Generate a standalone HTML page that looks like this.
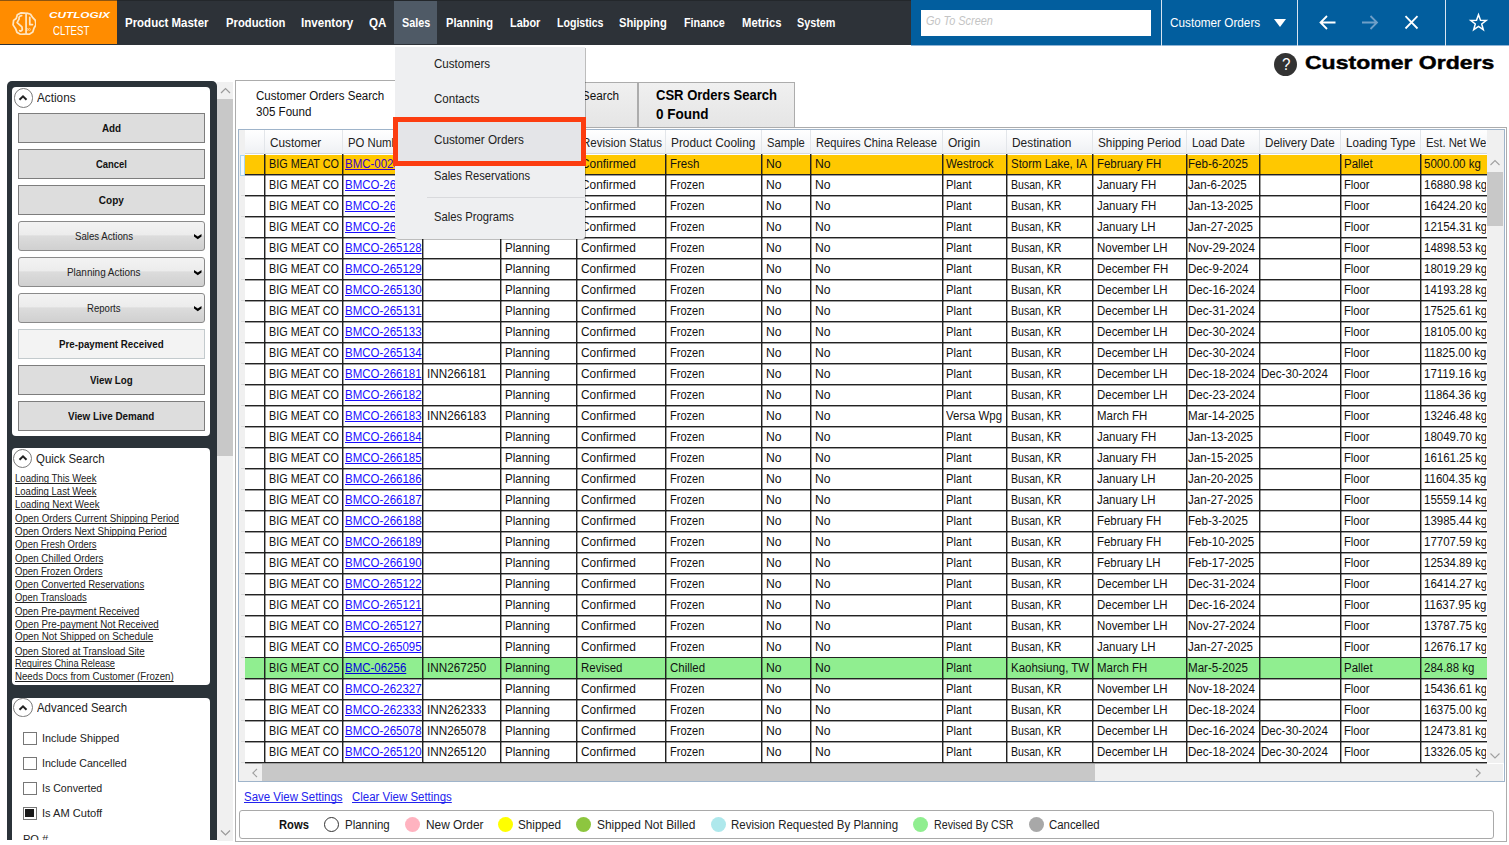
<!DOCTYPE html><html><head><meta charset="utf-8"><style>
html,body{margin:0;padding:0;background:#fff;width:1509px;height:845px;overflow:hidden;position:relative;font-family:"Liberation Sans",sans-serif;}
div{position:absolute;}
.t{position:absolute;white-space:nowrap;transform-origin:0 0;text-decoration-skip-ink:none;}
</style></head><body>
<div style="left:0.00px;top:0.00px;width:911.00px;height:45.00px;background:#2d3238;"></div>
<div style="left:0.00px;top:1.00px;width:117.00px;height:43.00px;background:#ff8c00;"></div>
<div style="left:0.00px;top:0.00px;width:911.00px;height:1.00px;background:#23272b;"></div>
<div style="left:0.00px;top:0.00px;width:117.00px;height:1.00px;background:#8c5410;"></div>
<div style="left:394.00px;top:1.00px;width:43.00px;height:43.00px;background:#4f5a66;"></div>
<svg style="position:absolute;left:11.8px;top:11.7px" width="24.6" height="23.5" viewBox="100 150 650 620">
<g fill="none" stroke="#ffe6c2" stroke-width="46" stroke-linejoin="round" stroke-linecap="round">
<path d="M450 178 L340 172 L240 222 L212 320 L142 372 L128 490 L196 590 L232 688 L330 742 L448 734"/>
<path d="M492 178 L590 208 L650 300 L718 372 L732 490 L680 580 L650 680 L550 742 L492 734"/>
<path d="M355 245 C300 250 272 290 290 330 L235 430 L362 545 L372 612 C362 652 322 662 302 640"/>
<path d="M570 290 L570 482 L640 482"/>
<path d="M472 192 L472 722"/>
<circle cx="500" cy="610" r="8"/><circle cx="560" cy="610" r="8"/>
</g></svg>
<span class="t" style="left:49.30px;top:11.17px;font-size:8.3px;line-height:8.3px;color:#fff;font-weight:700;font-style:italic;transform:scaleX(1.4181);">CUTLOGIX</span>
<span class="t" style="left:52.50px;top:25.09px;font-size:12.3px;line-height:12.3px;color:#fff;transform:scaleX(0.7871);">CLTEST</span>
<span class="t" style="left:125.40px;top:17.42px;font-size:12.5px;line-height:12.5px;color:#fff;font-weight:700;transform:scaleX(0.9176);">Product Master</span>
<span class="t" style="left:225.50px;top:17.42px;font-size:12.5px;line-height:12.5px;color:#fff;font-weight:700;transform:scaleX(0.9015);">Production</span>
<span class="t" style="left:301.00px;top:17.42px;font-size:12.5px;line-height:12.5px;color:#fff;font-weight:700;transform:scaleX(0.9298);">Inventory</span>
<span class="t" style="left:369.00px;top:17.42px;font-size:12.5px;line-height:12.5px;color:#fff;font-weight:700;transform:scaleX(0.9280);">QA</span>
<span class="t" style="left:402.20px;top:17.42px;font-size:12.5px;line-height:12.5px;color:#fff;font-weight:700;transform:scaleX(0.8644);">Sales</span>
<span class="t" style="left:446.10px;top:17.42px;font-size:12.5px;line-height:12.5px;color:#fff;font-weight:700;transform:scaleX(0.8891);">Planning</span>
<span class="t" style="left:509.60px;top:17.42px;font-size:12.5px;line-height:12.5px;color:#fff;font-weight:700;transform:scaleX(0.8748);">Labor</span>
<span class="t" style="left:556.70px;top:17.42px;font-size:12.5px;line-height:12.5px;color:#fff;font-weight:700;transform:scaleX(0.8474);">Logistics</span>
<span class="t" style="left:619.30px;top:17.42px;font-size:12.5px;line-height:12.5px;color:#fff;font-weight:700;transform:scaleX(0.8935);">Shipping</span>
<span class="t" style="left:684.10px;top:17.42px;font-size:12.5px;line-height:12.5px;color:#fff;font-weight:700;transform:scaleX(0.8656);">Finance</span>
<span class="t" style="left:741.60px;top:17.42px;font-size:12.5px;line-height:12.5px;color:#fff;font-weight:700;transform:scaleX(0.9006);">Metrics</span>
<span class="t" style="left:797.20px;top:17.42px;font-size:12.5px;line-height:12.5px;color:#fff;font-weight:700;transform:scaleX(0.8652);">System</span>
<div style="left:911.00px;top:0.00px;width:598.00px;height:45.00px;background:#025e9e;"></div>
<div style="left:911.00px;top:45.00px;width:598.00px;height:1.00px;background:#8fb4d6;"></div>
<div style="left:921.00px;top:9.50px;width:229.50px;height:26.00px;background:#fff;"></div>
<span class="t" style="left:926.00px;top:15.04px;font-size:12px;line-height:12px;color:#c4c4c4;font-style:italic;transform:scaleX(0.9081);">Go To Screen</span>
<div style="left:1161.00px;top:0.00px;width:1.20px;height:46.00px;background:#d7e4f0;"></div>
<div style="left:1297.00px;top:0.00px;width:1.20px;height:46.00px;background:#d7e4f0;"></div>
<div style="left:1445.00px;top:0.00px;width:1.20px;height:46.00px;background:#d7e4f0;"></div>
<span class="t" style="left:1170.40px;top:16.72px;font-size:12.5px;line-height:12.5px;color:#fff;transform:scaleX(0.9408);">Customer Orders</span>
<svg style="position:absolute;left:1273px;top:18px" width="14" height="10"><path d="M1 1 L13 1 L7 9 Z" fill="#fff"/></svg>
<svg style="position:absolute;left:1318px;top:13px" width="20" height="20" fill="none" stroke="#fff" stroke-width="1.8">
<path d="M2.5 9.5 L17.5 9.5 M9 3 L2.5 9.5 L9 16"/></svg>
<svg style="position:absolute;left:1360px;top:13px" width="20" height="20" fill="none" stroke="#6f9fc8" stroke-width="1.8">
<path d="M2 9.5 L17 9.5 M10.5 3 L17 9.5 L10.5 16"/></svg>
<svg style="position:absolute;left:1401px;top:12px" width="20" height="20" fill="none" stroke="#fff" stroke-width="1.8">
<path d="M4.5 4.2 L16.5 16.5 M16.5 4.2 L4.5 16.5"/></svg>
<svg style="position:absolute;left:1468px;top:12px" width="22" height="22" fill="none" stroke="#fff" stroke-width="1.5" stroke-linejoin="miter">
<path d="M10.5 2.8 L12.5 8.3 L18.2 8.5 L13.7 12 L15.3 17.6 L10.5 14.3 L5.7 17.6 L7.3 12 L2.8 8.5 L8.5 8.3 Z"/></svg>
<div style="left:1274.4px;top:53px;width:23px;height:23px;border-radius:50%;background:#333;"></div>
<span class="t" style="left:1281.65px;top:56.41px;font-size:17px;line-height:17px;color:#fff;transform:scaleX(0.8929);">?</span>
<span class="t" style="left:1305.40px;top:52.82px;font-size:19px;line-height:19px;color:#000;font-weight:700;transform:scaleX(1.2114);-webkit-text-stroke:0.45px #000;">Customer Orders</span>
<div style="left:6.50px;top:81.00px;width:210.00px;height:759.50px;background:#2b3339;border-radius:5px 5px 0 0;"></div>
<div style="left:12.40px;top:87.00px;width:198.00px;height:348.60px;background:#fff;border-radius:4px;"></div>
<div style="left:12.40px;top:448.00px;width:198.00px;height:237.40px;background:#fff;border-radius:4px;"></div>
<div style="left:12.40px;top:698.00px;width:198.00px;height:142.50px;background:#fff;border-radius:4px 4px 0 0;"></div>
<div style="left:13.60px;top:88.40px;width:19.2px;height:19.2px;border:1.5px solid #7a7a7a;border-radius:50%;box-sizing:border-box;"></div>
<svg style="position:absolute;left:17.20px;top:92.00px" width="12" height="12" fill="none" stroke="#222" stroke-width="2"><path d="M2.5 7.8 L6 4.3 L9.5 7.8"/></svg>
<span class="t" style="left:36.60px;top:91.72px;font-size:12.5px;line-height:12.5px;color:#222;transform:scaleX(0.9415);">Actions</span>
<div style="left:13.10px;top:448.70px;width:19.2px;height:19.2px;border:1.5px solid #7a7a7a;border-radius:50%;box-sizing:border-box;"></div>
<svg style="position:absolute;left:16.70px;top:452.30px" width="12" height="12" fill="none" stroke="#222" stroke-width="2"><path d="M2.5 7.8 L6 4.3 L9.5 7.8"/></svg>
<span class="t" style="left:36.40px;top:452.92px;font-size:12.5px;line-height:12.5px;color:#222;transform:scaleX(0.9147);">Quick Search</span>
<div style="left:13.40px;top:698.30px;width:19.2px;height:19.2px;border:1.5px solid #7a7a7a;border-radius:50%;box-sizing:border-box;"></div>
<svg style="position:absolute;left:17.00px;top:701.90px" width="12" height="12" fill="none" stroke="#222" stroke-width="2"><path d="M2.5 7.8 L6 4.3 L9.5 7.8"/></svg>
<span class="t" style="left:36.70px;top:702.42px;font-size:12.5px;line-height:12.5px;color:#222;transform:scaleX(0.9125);">Advanced Search</span>
<div style="left:17.50px;top:113.30px;width:187.60px;height:29.50px;background:#dddddd;border:1.3px solid #7d7d7d;box-sizing:border-box;"></div>
<span class="t" style="left:102.00px;top:123.84px;font-size:10px;line-height:10px;color:#111;font-weight:700;transform:scaleX(0.9845);">Add</span>
<div style="left:17.50px;top:149.30px;width:187.60px;height:29.50px;background:#dddddd;border:1.3px solid #7d7d7d;box-sizing:border-box;"></div>
<span class="t" style="left:96.00px;top:159.84px;font-size:10px;line-height:10px;color:#111;font-weight:700;transform:scaleX(0.9451);">Cancel</span>
<div style="left:17.50px;top:185.30px;width:187.60px;height:29.50px;background:#dddddd;border:1.3px solid #7d7d7d;box-sizing:border-box;"></div>
<span class="t" style="left:98.80px;top:195.84px;font-size:10px;line-height:10px;color:#111;font-weight:700;">Copy</span>
<div style="left:17.80px;top:221.30px;width:187.40px;height:29.50px;background:linear-gradient(#f3f3f3 0%,#ececec 45%,#dcdcdc 50%,#d0d0d0 100%);border:1.2px solid #8a8a8a;border-radius:3px;box-sizing:border-box;"></div>
<svg style="position:absolute;left:194px;top:234.10px" width="8" height="6"><path d="M0 0 L3.75 2.5 L7.5 0 L7.5 2.6 L3.75 5.2 L0 2.6 Z" fill="#000"/></svg>
<span class="t" style="left:75.00px;top:231.49px;font-size:11px;line-height:11px;color:#222;transform:scaleX(0.8788);">Sales Actions</span>
<div style="left:17.80px;top:257.30px;width:187.40px;height:29.50px;background:linear-gradient(#f3f3f3 0%,#ececec 45%,#dcdcdc 50%,#d0d0d0 100%);border:1.2px solid #8a8a8a;border-radius:3px;box-sizing:border-box;"></div>
<svg style="position:absolute;left:194px;top:270.10px" width="8" height="6"><path d="M0 0 L3.75 2.5 L7.5 0 L7.5 2.6 L3.75 5.2 L0 2.6 Z" fill="#000"/></svg>
<span class="t" style="left:67.00px;top:267.49px;font-size:11px;line-height:11px;color:#222;transform:scaleX(0.9029);">Planning Actions</span>
<div style="left:17.80px;top:293.30px;width:187.40px;height:29.50px;background:linear-gradient(#f3f3f3 0%,#ececec 45%,#dcdcdc 50%,#d0d0d0 100%);border:1.2px solid #8a8a8a;border-radius:3px;box-sizing:border-box;"></div>
<svg style="position:absolute;left:194px;top:306.10px" width="8" height="6"><path d="M0 0 L3.75 2.5 L7.5 0 L7.5 2.6 L3.75 5.2 L0 2.6 Z" fill="#000"/></svg>
<span class="t" style="left:87.10px;top:303.49px;font-size:11px;line-height:11px;color:#222;transform:scaleX(0.8701);">Reports</span>
<div style="left:17.50px;top:329.30px;width:187.60px;height:29.50px;background:#f3f3f3;border:1.2px solid #c3cacd;box-sizing:border-box;"></div>
<span class="t" style="left:58.80px;top:339.84px;font-size:10px;line-height:10px;color:#111;font-weight:700;transform:scaleX(0.9758);">Pre-payment Received</span>
<div style="left:17.50px;top:365.30px;width:187.60px;height:29.50px;background:#dddddd;border:1.3px solid #7d7d7d;box-sizing:border-box;"></div>
<span class="t" style="left:90.00px;top:375.84px;font-size:10px;line-height:10px;color:#111;font-weight:700;transform:scaleX(0.9748);">View Log</span>
<div style="left:17.50px;top:401.30px;width:187.60px;height:29.50px;background:#dddddd;border:1.3px solid #7d7d7d;box-sizing:border-box;"></div>
<span class="t" style="left:68.20px;top:411.84px;font-size:10px;line-height:10px;color:#111;font-weight:700;transform:scaleX(0.9840);">View Live Demand</span>
<span class="t" style="left:15.20px;top:473.54px;font-size:10px;line-height:10px;color:#222;text-decoration:underline;transform:scaleX(0.9555);">Loading This Week</span>
<span class="t" style="left:15.20px;top:486.64px;font-size:10px;line-height:10px;color:#222;text-decoration:underline;transform:scaleX(0.9532);">Loading Last Week</span>
<span class="t" style="left:15.20px;top:499.74px;font-size:10px;line-height:10px;color:#222;text-decoration:underline;transform:scaleX(0.9702);">Loading Next Week</span>
<span class="t" style="left:15.20px;top:513.63px;font-size:10px;line-height:10px;color:#222;text-decoration:underline;transform:scaleX(0.9803);">Open Orders Current Shipping Period</span>
<span class="t" style="left:15.20px;top:526.73px;font-size:10px;line-height:10px;color:#222;text-decoration:underline;transform:scaleX(0.9819);">Open Orders Next Shipping Period</span>
<span class="t" style="left:15.20px;top:539.73px;font-size:10px;line-height:10px;color:#222;text-decoration:underline;transform:scaleX(0.9466);">Open Fresh Orders</span>
<span class="t" style="left:15.20px;top:553.73px;font-size:10px;line-height:10px;color:#222;text-decoration:underline;transform:scaleX(0.9682);">Open Chilled Orders</span>
<span class="t" style="left:15.20px;top:566.73px;font-size:10px;line-height:10px;color:#222;text-decoration:underline;transform:scaleX(0.9553);">Open Frozen Orders</span>
<span class="t" style="left:15.20px;top:579.53px;font-size:10px;line-height:10px;color:#222;text-decoration:underline;transform:scaleX(0.9606);">Open Converted Reservations</span>
<span class="t" style="left:15.20px;top:592.63px;font-size:10px;line-height:10px;color:#222;text-decoration:underline;transform:scaleX(0.9423);">Open Transloads</span>
<span class="t" style="left:15.20px;top:606.53px;font-size:10px;line-height:10px;color:#222;text-decoration:underline;transform:scaleX(0.9635);">Open Pre-payment Received</span>
<span class="t" style="left:15.20px;top:619.63px;font-size:10px;line-height:10px;color:#222;text-decoration:underline;transform:scaleX(0.9762);">Open Pre-payment Not Received</span>
<span class="t" style="left:15.20px;top:632.43px;font-size:10px;line-height:10px;color:#222;text-decoration:underline;transform:scaleX(0.9822);">Open Not Shipped on Schedule</span>
<span class="t" style="left:15.20px;top:646.53px;font-size:10px;line-height:10px;color:#222;text-decoration:underline;transform:scaleX(0.9636);">Open Stored at Transload Site</span>
<span class="t" style="left:15.20px;top:659.43px;font-size:10px;line-height:10px;color:#222;text-decoration:underline;transform:scaleX(0.9216);">Requires China Release</span>
<span class="t" style="left:15.20px;top:672.43px;font-size:10px;line-height:10px;color:#222;text-decoration:underline;transform:scaleX(0.9677);">Needs Docs from Customer (Frozen)</span>
<div style="left:22.50px;top:731.80px;width:14.00px;height:13.00px;border:1.3px solid #777;box-sizing:border-box;background:#fff;"></div>
<span class="t" style="left:41.80px;top:732.87px;font-size:11.5px;line-height:11.5px;color:#222;transform:scaleX(0.9375);">Include Shipped</span>
<div style="left:22.50px;top:756.80px;width:14.00px;height:13.00px;border:1.3px solid #777;box-sizing:border-box;background:#fff;"></div>
<span class="t" style="left:41.80px;top:757.87px;font-size:11.5px;line-height:11.5px;color:#222;transform:scaleX(0.9253);">Include Cancelled</span>
<div style="left:22.50px;top:781.80px;width:14.00px;height:13.00px;border:1.3px solid #777;box-sizing:border-box;background:#fff;"></div>
<span class="t" style="left:41.80px;top:782.87px;font-size:11.5px;line-height:11.5px;color:#222;transform:scaleX(0.9232);">Is Converted</span>
<div style="left:22.50px;top:806.80px;width:14.00px;height:13.00px;border:1.3px solid #777;box-sizing:border-box;background:#fff;"></div>
<div style="left:25.00px;top:809.30px;width:9.00px;height:8.00px;background:#1a1a1a;"></div>
<span class="t" style="left:41.80px;top:807.87px;font-size:11.5px;line-height:11.5px;color:#222;transform:scaleX(0.9640);">Is AM Cutoff</span>
<span class="t" style="left:22.50px;top:833.77px;font-size:11.5px;line-height:11.5px;color:#222;transform:scaleX(0.9600);">PO #</span>
<div style="left:0.00px;top:840.30px;width:235.00px;height:5.00px;background:#fff;"></div>
<div style="left:216.80px;top:81.50px;width:16.60px;height:759.00px;background:#f0f0f0;"></div>
<div style="left:216.80px;top:98.50px;width:16.60px;height:357.00px;background:#c8c8c8;"></div>
<svg style="position:absolute;left:219px;top:86px" width="13" height="10"><path d="M2 7 L6.5 2.5 L11 7" fill="none" stroke="#9a9a9a" stroke-width="1.2"/></svg>
<svg style="position:absolute;left:219px;top:828px" width="13" height="10"><path d="M2 2.5 L6.5 7 L11 2.5" fill="none" stroke="#9a9a9a" stroke-width="1.2"/></svg>
<div style="left:235.20px;top:126.50px;width:1272.00px;height:715.00px;border:1px solid #acacac;border-top:none;box-sizing:border-box;"></div>
<div style="left:235.20px;top:80.00px;width:170.00px;height:47.50px;background:#fff;border:1px solid #acacac;border-bottom:none;box-sizing:border-box;"></div>
<span class="t" style="left:255.70px;top:89.62px;font-size:12.5px;line-height:12.5px;color:#111;transform:scaleX(0.9231);">Customer Orders Search</span>
<span class="t" style="left:255.70px;top:105.82px;font-size:12.5px;line-height:12.5px;color:#111;transform:scaleX(0.9272);">305 Found</span>
<div style="left:405.00px;top:126.50px;width:1102.00px;height:1.00px;background:#acacac;"></div>
<div style="left:405.00px;top:82.00px;width:233.00px;height:45.00px;background:linear-gradient(#f0f0f0,#e5e5e5);border:1px solid #acacac;border-bottom:none;box-sizing:border-box;"></div>
<span class="t" style="left:510.46px;top:89.62px;font-size:12.5px;line-height:12.5px;color:#111;transform:scaleX(0.9400);">Reservations Search</span>
<div style="left:638.00px;top:82.00px;width:157.00px;height:45.00px;background:linear-gradient(#f0f0f0,#e5e5e5);border:1px solid #acacac;border-bottom:none;box-sizing:border-box;"></div>
<span class="t" style="left:655.60px;top:88.35px;font-size:14px;line-height:14px;color:#000;font-weight:700;transform:scaleX(0.9313);">CSR Orders Search</span>
<span class="t" style="left:655.60px;top:107.25px;font-size:14px;line-height:14px;color:#000;font-weight:700;transform:scaleX(0.9640);">0 Found</span>
<div style="left:238.30px;top:129.20px;width:1266.70px;height:652.60px;border:1px solid #9fb4ca;box-sizing:border-box;background:#fff;"></div>
<div style="left:239.30px;top:130.20px;width:6.00px;height:634.00px;background:#f0f0f0;"></div>
<div style="left:245.00px;top:130.20px;width:1242.00px;height:23.40px;background:linear-gradient(#ffffff 0%,#f7f8fa 50%,#eef0f3 100%);"></div>
<div style="left:245.00px;top:152.80px;width:1242.00px;height:1.00px;background:#d5d9de;"></div>
<div style="left:264.10px;top:130.20px;width:1.00px;height:23.40px;background:#e3e6ea;"></div>
<div style="left:342.30px;top:130.20px;width:1.00px;height:23.40px;background:#e3e6ea;"></div>
<div style="left:422.30px;top:130.20px;width:1.00px;height:23.40px;background:#e3e6ea;"></div>
<div style="left:500.10px;top:130.20px;width:1.00px;height:23.40px;background:#e3e6ea;"></div>
<div style="left:576.10px;top:130.20px;width:1.00px;height:23.40px;background:#e3e6ea;"></div>
<div style="left:665.10px;top:130.20px;width:1.00px;height:23.40px;background:#e3e6ea;"></div>
<div style="left:761.20px;top:130.20px;width:1.00px;height:23.40px;background:#e3e6ea;"></div>
<div style="left:810.00px;top:130.20px;width:1.00px;height:23.40px;background:#e3e6ea;"></div>
<div style="left:941.60px;top:130.20px;width:1.00px;height:23.40px;background:#e3e6ea;"></div>
<div style="left:1005.90px;top:130.20px;width:1.00px;height:23.40px;background:#e3e6ea;"></div>
<div style="left:1091.80px;top:130.20px;width:1.00px;height:23.40px;background:#e3e6ea;"></div>
<div style="left:1185.70px;top:130.20px;width:1.00px;height:23.40px;background:#e3e6ea;"></div>
<div style="left:1258.60px;top:130.20px;width:1.00px;height:23.40px;background:#e3e6ea;"></div>
<div style="left:1339.70px;top:130.20px;width:1.00px;height:23.40px;background:#e3e6ea;"></div>
<div style="left:1419.70px;top:130.20px;width:1.00px;height:23.40px;background:#e3e6ea;"></div>
<div style="left:265.10px;top:130.20px;width:77.20px;height:23.40px;overflow:hidden;"><span class="t" style="left:5.20px;top:6.84px;font-size:12px;line-height:12px;color:#222;transform:scaleX(0.9834);">Customer</span></div>
<div style="left:343.30px;top:130.20px;width:79.00px;height:23.40px;overflow:hidden;"><span class="t" style="left:5.20px;top:6.84px;font-size:12px;line-height:12px;color:#222;transform:scaleX(0.9450);">PO Number</span></div>
<div style="left:423.30px;top:130.20px;width:76.80px;height:23.40px;overflow:hidden;"><span class="t" style="left:5.20px;top:6.84px;font-size:12px;line-height:12px;color:#222;transform:scaleX(0.9450);">Customer PO</span></div>
<div style="left:501.10px;top:130.20px;width:75.00px;height:23.40px;overflow:hidden;"><span class="t" style="left:5.20px;top:6.84px;font-size:12px;line-height:12px;color:#222;transform:scaleX(0.9450);">Status</span></div>
<div style="left:577.10px;top:130.20px;width:88.00px;height:23.40px;overflow:hidden;"><span class="t" style="left:5.20px;top:6.84px;font-size:12px;line-height:12px;color:#222;transform:scaleX(0.9592);">Revision Status</span></div>
<div style="left:666.10px;top:130.20px;width:95.10px;height:23.40px;overflow:hidden;"><span class="t" style="left:5.20px;top:6.84px;font-size:12px;line-height:12px;color:#222;transform:scaleX(0.9892);">Product Cooling</span></div>
<div style="left:762.20px;top:130.20px;width:47.80px;height:23.40px;overflow:hidden;"><span class="t" style="left:5.20px;top:6.84px;font-size:12px;line-height:12px;color:#222;transform:scaleX(0.9292);">Sample</span></div>
<div style="left:811.00px;top:130.20px;width:130.60px;height:23.40px;overflow:hidden;"><span class="t" style="left:5.20px;top:6.84px;font-size:12px;line-height:12px;color:#222;transform:scaleX(0.9294);">Requires China Release</span></div>
<div style="left:942.60px;top:130.20px;width:63.30px;height:23.40px;overflow:hidden;"><span class="t" style="left:5.20px;top:6.84px;font-size:12px;line-height:12px;color:#222;transform:scaleX(1.0019);">Origin</span></div>
<div style="left:1006.90px;top:130.20px;width:84.90px;height:23.40px;overflow:hidden;"><span class="t" style="left:5.20px;top:6.84px;font-size:12px;line-height:12px;color:#222;transform:scaleX(0.9900);">Destination</span></div>
<div style="left:1092.80px;top:130.20px;width:92.90px;height:23.40px;overflow:hidden;"><span class="t" style="left:5.20px;top:6.84px;font-size:12px;line-height:12px;color:#222;transform:scaleX(0.9809);">Shipping Period</span></div>
<div style="left:1186.70px;top:130.20px;width:71.90px;height:23.40px;overflow:hidden;"><span class="t" style="left:5.20px;top:6.84px;font-size:12px;line-height:12px;color:#222;transform:scaleX(0.9544);">Load Date</span></div>
<div style="left:1259.60px;top:130.20px;width:80.10px;height:23.40px;overflow:hidden;"><span class="t" style="left:5.20px;top:6.84px;font-size:12px;line-height:12px;color:#222;transform:scaleX(0.9681);">Delivery Date</span></div>
<div style="left:1340.70px;top:130.20px;width:79.00px;height:23.40px;overflow:hidden;"><span class="t" style="left:5.20px;top:6.84px;font-size:12px;line-height:12px;color:#222;transform:scaleX(0.9669);">Loading Type</span></div>
<div style="left:1420.70px;top:130.20px;width:65.80px;height:23.40px;overflow:hidden;"><span class="t" style="left:5.20px;top:6.84px;font-size:12px;line-height:12px;color:#222;transform:scaleX(0.9450);">Est. Net Weight</span></div>
<div style="left:245.00px;top:155.00px;width:1242.00px;height:19.00px;background:#ffc800;"></div>
<div style="left:245.00px;top:174.00px;width:1242.00px;height:1.00px;background:#222;"></div>
<div style="left:245.00px;top:175.00px;width:1242.00px;height:1.00px;background:rgba(0,0,0,0.38);"></div>
<div style="left:240.50px;top:174.20px;width:4.00px;height:1.00px;background:#dadada;"></div>
<div style="left:265.30px;top:154.42px;width:76.80px;height:19.58px;overflow:hidden;"><span class="t" style="left:3.60px;top:3.72px;font-size:12px;line-height:12px;color:#111;transform:scaleX(0.9017);">BIG MEAT CO</span></div>
<div style="left:343.50px;top:154.42px;width:78.60px;height:19.58px;overflow:hidden;"><span class="t" style="left:1.30px;top:3.72px;font-size:12px;line-height:12px;color:#3c00c8;text-decoration:underline;transform:scaleX(0.9570);">BMC-00256</span></div>
<div style="left:501.30px;top:154.42px;width:74.60px;height:19.58px;overflow:hidden;"><span class="t" style="left:3.60px;top:3.72px;font-size:12px;line-height:12px;color:#111;transform:scaleX(0.9619);">Planning</span></div>
<div style="left:577.30px;top:154.42px;width:87.60px;height:19.58px;overflow:hidden;"><span class="t" style="left:3.60px;top:3.72px;font-size:12px;line-height:12px;color:#111;transform:scaleX(0.9906);">Confirmed</span></div>
<div style="left:666.30px;top:154.42px;width:94.70px;height:19.58px;overflow:hidden;"><span class="t" style="left:3.60px;top:3.72px;font-size:12px;line-height:12px;color:#111;transform:scaleX(0.9550);">Fresh</span></div>
<div style="left:762.40px;top:154.42px;width:47.40px;height:19.58px;overflow:hidden;"><span class="t" style="left:3.60px;top:3.72px;font-size:12px;line-height:12px;color:#111;transform:scaleX(1.0156);">No</span></div>
<div style="left:811.20px;top:154.42px;width:130.20px;height:19.58px;overflow:hidden;"><span class="t" style="left:3.60px;top:3.72px;font-size:12px;line-height:12px;color:#111;transform:scaleX(1.0156);">No</span></div>
<div style="left:942.80px;top:154.42px;width:62.90px;height:19.58px;overflow:hidden;"><span class="t" style="left:3.60px;top:3.72px;font-size:12px;line-height:12px;color:#111;transform:scaleX(0.9550);">Westrock</span></div>
<div style="left:1007.10px;top:154.42px;width:84.50px;height:19.58px;overflow:hidden;"><span class="t" style="left:3.60px;top:3.72px;font-size:12px;line-height:12px;color:#111;transform:scaleX(0.9550);">Storm Lake, IA</span></div>
<div style="left:1093.00px;top:154.42px;width:92.50px;height:19.58px;overflow:hidden;"><span class="t" style="left:3.60px;top:3.72px;font-size:12px;line-height:12px;color:#111;transform:scaleX(0.9540);">February FH</span></div>
<div style="left:1186.90px;top:154.42px;width:71.50px;height:19.58px;overflow:hidden;"><span class="t" style="left:1.40px;top:3.72px;font-size:12px;line-height:12px;color:#111;transform:scaleX(0.9650);">Feb-6-2025</span></div>
<div style="left:1340.90px;top:154.42px;width:78.60px;height:19.58px;overflow:hidden;"><span class="t" style="left:3.60px;top:3.72px;font-size:12px;line-height:12px;color:#111;transform:scaleX(0.9550);">Pallet</span></div>
<div style="left:1420.90px;top:154.42px;width:65.40px;height:19.58px;overflow:hidden;"><span class="t" style="left:3.60px;top:3.72px;font-size:12px;line-height:12px;color:#111;transform:scaleX(0.9570);">5000.00 kg</span></div>
<div style="left:245.00px;top:195.00px;width:1242.00px;height:1.00px;background:#222;"></div>
<div style="left:245.00px;top:196.00px;width:1242.00px;height:1.00px;background:rgba(0,0,0,0.38);"></div>
<div style="left:240.50px;top:195.18px;width:4.00px;height:1.00px;background:#dadada;"></div>
<div style="left:265.30px;top:175.40px;width:76.80px;height:19.58px;overflow:hidden;"><span class="t" style="left:3.60px;top:3.72px;font-size:12px;line-height:12px;color:#111;transform:scaleX(0.9017);">BIG MEAT CO</span></div>
<div style="left:343.50px;top:175.40px;width:78.60px;height:19.58px;overflow:hidden;"><span class="t" style="left:1.30px;top:3.72px;font-size:12px;line-height:12px;color:#1a0dff;text-decoration:underline;transform:scaleX(0.9570);">BMCO-265140</span></div>
<div style="left:501.30px;top:175.40px;width:74.60px;height:19.58px;overflow:hidden;"><span class="t" style="left:3.60px;top:3.72px;font-size:12px;line-height:12px;color:#111;transform:scaleX(0.9619);">Planning</span></div>
<div style="left:577.30px;top:175.40px;width:87.60px;height:19.58px;overflow:hidden;"><span class="t" style="left:3.60px;top:3.72px;font-size:12px;line-height:12px;color:#111;transform:scaleX(0.9906);">Confirmed</span></div>
<div style="left:666.30px;top:175.40px;width:94.70px;height:19.58px;overflow:hidden;"><span class="t" style="left:3.60px;top:3.72px;font-size:12px;line-height:12px;color:#111;transform:scaleX(0.9218);">Frozen</span></div>
<div style="left:762.40px;top:175.40px;width:47.40px;height:19.58px;overflow:hidden;"><span class="t" style="left:3.60px;top:3.72px;font-size:12px;line-height:12px;color:#111;transform:scaleX(1.0156);">No</span></div>
<div style="left:811.20px;top:175.40px;width:130.20px;height:19.58px;overflow:hidden;"><span class="t" style="left:3.60px;top:3.72px;font-size:12px;line-height:12px;color:#111;transform:scaleX(1.0156);">No</span></div>
<div style="left:942.80px;top:175.40px;width:62.90px;height:19.58px;overflow:hidden;"><span class="t" style="left:3.60px;top:3.72px;font-size:12px;line-height:12px;color:#111;transform:scaleX(0.9320);">Plant</span></div>
<div style="left:1007.10px;top:175.40px;width:84.50px;height:19.58px;overflow:hidden;"><span class="t" style="left:3.60px;top:3.72px;font-size:12px;line-height:12px;color:#111;transform:scaleX(0.8804);">Busan, KR</span></div>
<div style="left:1093.00px;top:175.40px;width:92.50px;height:19.58px;overflow:hidden;"><span class="t" style="left:3.60px;top:3.72px;font-size:12px;line-height:12px;color:#111;transform:scaleX(0.9540);">January FH</span></div>
<div style="left:1186.90px;top:175.40px;width:71.50px;height:19.58px;overflow:hidden;"><span class="t" style="left:1.40px;top:3.72px;font-size:12px;line-height:12px;color:#111;transform:scaleX(0.9650);">Jan-6-2025</span></div>
<div style="left:1340.90px;top:175.40px;width:78.60px;height:19.58px;overflow:hidden;"><span class="t" style="left:3.60px;top:3.72px;font-size:12px;line-height:12px;color:#111;transform:scaleX(0.9357);">Floor</span></div>
<div style="left:1420.90px;top:175.40px;width:65.40px;height:19.58px;overflow:hidden;"><span class="t" style="left:3.60px;top:3.72px;font-size:12px;line-height:12px;color:#111;transform:scaleX(0.9570);">16880.98 kg</span></div>
<div style="left:245.00px;top:216.00px;width:1242.00px;height:1.00px;background:#222;"></div>
<div style="left:245.00px;top:217.00px;width:1242.00px;height:1.00px;background:rgba(0,0,0,0.38);"></div>
<div style="left:240.50px;top:216.16px;width:4.00px;height:1.00px;background:#dadada;"></div>
<div style="left:265.30px;top:196.38px;width:76.80px;height:19.58px;overflow:hidden;"><span class="t" style="left:3.60px;top:3.72px;font-size:12px;line-height:12px;color:#111;transform:scaleX(0.9017);">BIG MEAT CO</span></div>
<div style="left:343.50px;top:196.38px;width:78.60px;height:19.58px;overflow:hidden;"><span class="t" style="left:1.30px;top:3.72px;font-size:12px;line-height:12px;color:#1a0dff;text-decoration:underline;transform:scaleX(0.9570);">BMCO-265141</span></div>
<div style="left:501.30px;top:196.38px;width:74.60px;height:19.58px;overflow:hidden;"><span class="t" style="left:3.60px;top:3.72px;font-size:12px;line-height:12px;color:#111;transform:scaleX(0.9619);">Planning</span></div>
<div style="left:577.30px;top:196.38px;width:87.60px;height:19.58px;overflow:hidden;"><span class="t" style="left:3.60px;top:3.72px;font-size:12px;line-height:12px;color:#111;transform:scaleX(0.9906);">Confirmed</span></div>
<div style="left:666.30px;top:196.38px;width:94.70px;height:19.58px;overflow:hidden;"><span class="t" style="left:3.60px;top:3.72px;font-size:12px;line-height:12px;color:#111;transform:scaleX(0.9218);">Frozen</span></div>
<div style="left:762.40px;top:196.38px;width:47.40px;height:19.58px;overflow:hidden;"><span class="t" style="left:3.60px;top:3.72px;font-size:12px;line-height:12px;color:#111;transform:scaleX(1.0156);">No</span></div>
<div style="left:811.20px;top:196.38px;width:130.20px;height:19.58px;overflow:hidden;"><span class="t" style="left:3.60px;top:3.72px;font-size:12px;line-height:12px;color:#111;transform:scaleX(1.0156);">No</span></div>
<div style="left:942.80px;top:196.38px;width:62.90px;height:19.58px;overflow:hidden;"><span class="t" style="left:3.60px;top:3.72px;font-size:12px;line-height:12px;color:#111;transform:scaleX(0.9320);">Plant</span></div>
<div style="left:1007.10px;top:196.38px;width:84.50px;height:19.58px;overflow:hidden;"><span class="t" style="left:3.60px;top:3.72px;font-size:12px;line-height:12px;color:#111;transform:scaleX(0.8804);">Busan, KR</span></div>
<div style="left:1093.00px;top:196.38px;width:92.50px;height:19.58px;overflow:hidden;"><span class="t" style="left:3.60px;top:3.72px;font-size:12px;line-height:12px;color:#111;transform:scaleX(0.9540);">January FH</span></div>
<div style="left:1186.90px;top:196.38px;width:71.50px;height:19.58px;overflow:hidden;"><span class="t" style="left:1.40px;top:3.72px;font-size:12px;line-height:12px;color:#111;transform:scaleX(0.9650);">Jan-13-2025</span></div>
<div style="left:1340.90px;top:196.38px;width:78.60px;height:19.58px;overflow:hidden;"><span class="t" style="left:3.60px;top:3.72px;font-size:12px;line-height:12px;color:#111;transform:scaleX(0.9357);">Floor</span></div>
<div style="left:1420.90px;top:196.38px;width:65.40px;height:19.58px;overflow:hidden;"><span class="t" style="left:3.60px;top:3.72px;font-size:12px;line-height:12px;color:#111;transform:scaleX(0.9570);">16424.20 kg</span></div>
<div style="left:245.00px;top:237.00px;width:1242.00px;height:1.00px;background:#222;"></div>
<div style="left:245.00px;top:238.00px;width:1242.00px;height:1.00px;background:rgba(0,0,0,0.38);"></div>
<div style="left:240.50px;top:237.14px;width:4.00px;height:1.00px;background:#dadada;"></div>
<div style="left:265.30px;top:217.36px;width:76.80px;height:19.58px;overflow:hidden;"><span class="t" style="left:3.60px;top:3.72px;font-size:12px;line-height:12px;color:#111;transform:scaleX(0.9017);">BIG MEAT CO</span></div>
<div style="left:343.50px;top:217.36px;width:78.60px;height:19.58px;overflow:hidden;"><span class="t" style="left:1.30px;top:3.72px;font-size:12px;line-height:12px;color:#1a0dff;text-decoration:underline;transform:scaleX(0.9570);">BMCO-265142</span></div>
<div style="left:501.30px;top:217.36px;width:74.60px;height:19.58px;overflow:hidden;"><span class="t" style="left:3.60px;top:3.72px;font-size:12px;line-height:12px;color:#111;transform:scaleX(0.9619);">Planning</span></div>
<div style="left:577.30px;top:217.36px;width:87.60px;height:19.58px;overflow:hidden;"><span class="t" style="left:3.60px;top:3.72px;font-size:12px;line-height:12px;color:#111;transform:scaleX(0.9906);">Confirmed</span></div>
<div style="left:666.30px;top:217.36px;width:94.70px;height:19.58px;overflow:hidden;"><span class="t" style="left:3.60px;top:3.72px;font-size:12px;line-height:12px;color:#111;transform:scaleX(0.9218);">Frozen</span></div>
<div style="left:762.40px;top:217.36px;width:47.40px;height:19.58px;overflow:hidden;"><span class="t" style="left:3.60px;top:3.72px;font-size:12px;line-height:12px;color:#111;transform:scaleX(1.0156);">No</span></div>
<div style="left:811.20px;top:217.36px;width:130.20px;height:19.58px;overflow:hidden;"><span class="t" style="left:3.60px;top:3.72px;font-size:12px;line-height:12px;color:#111;transform:scaleX(1.0156);">No</span></div>
<div style="left:942.80px;top:217.36px;width:62.90px;height:19.58px;overflow:hidden;"><span class="t" style="left:3.60px;top:3.72px;font-size:12px;line-height:12px;color:#111;transform:scaleX(0.9320);">Plant</span></div>
<div style="left:1007.10px;top:217.36px;width:84.50px;height:19.58px;overflow:hidden;"><span class="t" style="left:3.60px;top:3.72px;font-size:12px;line-height:12px;color:#111;transform:scaleX(0.8804);">Busan, KR</span></div>
<div style="left:1093.00px;top:217.36px;width:92.50px;height:19.58px;overflow:hidden;"><span class="t" style="left:3.60px;top:3.72px;font-size:12px;line-height:12px;color:#111;transform:scaleX(0.9540);">January LH</span></div>
<div style="left:1186.90px;top:217.36px;width:71.50px;height:19.58px;overflow:hidden;"><span class="t" style="left:1.40px;top:3.72px;font-size:12px;line-height:12px;color:#111;transform:scaleX(0.9650);">Jan-27-2025</span></div>
<div style="left:1340.90px;top:217.36px;width:78.60px;height:19.58px;overflow:hidden;"><span class="t" style="left:3.60px;top:3.72px;font-size:12px;line-height:12px;color:#111;transform:scaleX(0.9357);">Floor</span></div>
<div style="left:1420.90px;top:217.36px;width:65.40px;height:19.58px;overflow:hidden;"><span class="t" style="left:3.60px;top:3.72px;font-size:12px;line-height:12px;color:#111;transform:scaleX(0.9570);">12154.31 kg</span></div>
<div style="left:245.00px;top:258.00px;width:1242.00px;height:1.00px;background:#222;"></div>
<div style="left:245.00px;top:259.00px;width:1242.00px;height:1.00px;background:rgba(0,0,0,0.38);"></div>
<div style="left:240.50px;top:258.12px;width:4.00px;height:1.00px;background:#dadada;"></div>
<div style="left:265.30px;top:238.34px;width:76.80px;height:19.58px;overflow:hidden;"><span class="t" style="left:3.60px;top:3.72px;font-size:12px;line-height:12px;color:#111;transform:scaleX(0.9017);">BIG MEAT CO</span></div>
<div style="left:343.50px;top:238.34px;width:78.60px;height:19.58px;overflow:hidden;"><span class="t" style="left:1.30px;top:3.72px;font-size:12px;line-height:12px;color:#1a0dff;text-decoration:underline;transform:scaleX(0.9570);">BMCO-265128</span></div>
<div style="left:501.30px;top:238.34px;width:74.60px;height:19.58px;overflow:hidden;"><span class="t" style="left:3.60px;top:3.72px;font-size:12px;line-height:12px;color:#111;transform:scaleX(0.9619);">Planning</span></div>
<div style="left:577.30px;top:238.34px;width:87.60px;height:19.58px;overflow:hidden;"><span class="t" style="left:3.60px;top:3.72px;font-size:12px;line-height:12px;color:#111;transform:scaleX(0.9906);">Confirmed</span></div>
<div style="left:666.30px;top:238.34px;width:94.70px;height:19.58px;overflow:hidden;"><span class="t" style="left:3.60px;top:3.72px;font-size:12px;line-height:12px;color:#111;transform:scaleX(0.9218);">Frozen</span></div>
<div style="left:762.40px;top:238.34px;width:47.40px;height:19.58px;overflow:hidden;"><span class="t" style="left:3.60px;top:3.72px;font-size:12px;line-height:12px;color:#111;transform:scaleX(1.0156);">No</span></div>
<div style="left:811.20px;top:238.34px;width:130.20px;height:19.58px;overflow:hidden;"><span class="t" style="left:3.60px;top:3.72px;font-size:12px;line-height:12px;color:#111;transform:scaleX(1.0156);">No</span></div>
<div style="left:942.80px;top:238.34px;width:62.90px;height:19.58px;overflow:hidden;"><span class="t" style="left:3.60px;top:3.72px;font-size:12px;line-height:12px;color:#111;transform:scaleX(0.9320);">Plant</span></div>
<div style="left:1007.10px;top:238.34px;width:84.50px;height:19.58px;overflow:hidden;"><span class="t" style="left:3.60px;top:3.72px;font-size:12px;line-height:12px;color:#111;transform:scaleX(0.8804);">Busan, KR</span></div>
<div style="left:1093.00px;top:238.34px;width:92.50px;height:19.58px;overflow:hidden;"><span class="t" style="left:3.60px;top:3.72px;font-size:12px;line-height:12px;color:#111;transform:scaleX(0.9540);">November LH</span></div>
<div style="left:1186.90px;top:238.34px;width:71.50px;height:19.58px;overflow:hidden;"><span class="t" style="left:1.40px;top:3.72px;font-size:12px;line-height:12px;color:#111;transform:scaleX(0.9650);">Nov-29-2024</span></div>
<div style="left:1340.90px;top:238.34px;width:78.60px;height:19.58px;overflow:hidden;"><span class="t" style="left:3.60px;top:3.72px;font-size:12px;line-height:12px;color:#111;transform:scaleX(0.9357);">Floor</span></div>
<div style="left:1420.90px;top:238.34px;width:65.40px;height:19.58px;overflow:hidden;"><span class="t" style="left:3.60px;top:3.72px;font-size:12px;line-height:12px;color:#111;transform:scaleX(0.9570);">14898.53 kg</span></div>
<div style="left:245.00px;top:279.00px;width:1242.00px;height:1.00px;background:#222;"></div>
<div style="left:245.00px;top:280.00px;width:1242.00px;height:1.00px;background:rgba(0,0,0,0.38);"></div>
<div style="left:240.50px;top:279.10px;width:4.00px;height:1.00px;background:#dadada;"></div>
<div style="left:265.30px;top:259.32px;width:76.80px;height:19.58px;overflow:hidden;"><span class="t" style="left:3.60px;top:3.72px;font-size:12px;line-height:12px;color:#111;transform:scaleX(0.9017);">BIG MEAT CO</span></div>
<div style="left:343.50px;top:259.32px;width:78.60px;height:19.58px;overflow:hidden;"><span class="t" style="left:1.30px;top:3.72px;font-size:12px;line-height:12px;color:#1a0dff;text-decoration:underline;transform:scaleX(0.9570);">BMCO-265129</span></div>
<div style="left:501.30px;top:259.32px;width:74.60px;height:19.58px;overflow:hidden;"><span class="t" style="left:3.60px;top:3.72px;font-size:12px;line-height:12px;color:#111;transform:scaleX(0.9619);">Planning</span></div>
<div style="left:577.30px;top:259.32px;width:87.60px;height:19.58px;overflow:hidden;"><span class="t" style="left:3.60px;top:3.72px;font-size:12px;line-height:12px;color:#111;transform:scaleX(0.9906);">Confirmed</span></div>
<div style="left:666.30px;top:259.32px;width:94.70px;height:19.58px;overflow:hidden;"><span class="t" style="left:3.60px;top:3.72px;font-size:12px;line-height:12px;color:#111;transform:scaleX(0.9218);">Frozen</span></div>
<div style="left:762.40px;top:259.32px;width:47.40px;height:19.58px;overflow:hidden;"><span class="t" style="left:3.60px;top:3.72px;font-size:12px;line-height:12px;color:#111;transform:scaleX(1.0156);">No</span></div>
<div style="left:811.20px;top:259.32px;width:130.20px;height:19.58px;overflow:hidden;"><span class="t" style="left:3.60px;top:3.72px;font-size:12px;line-height:12px;color:#111;transform:scaleX(1.0156);">No</span></div>
<div style="left:942.80px;top:259.32px;width:62.90px;height:19.58px;overflow:hidden;"><span class="t" style="left:3.60px;top:3.72px;font-size:12px;line-height:12px;color:#111;transform:scaleX(0.9320);">Plant</span></div>
<div style="left:1007.10px;top:259.32px;width:84.50px;height:19.58px;overflow:hidden;"><span class="t" style="left:3.60px;top:3.72px;font-size:12px;line-height:12px;color:#111;transform:scaleX(0.8804);">Busan, KR</span></div>
<div style="left:1093.00px;top:259.32px;width:92.50px;height:19.58px;overflow:hidden;"><span class="t" style="left:3.60px;top:3.72px;font-size:12px;line-height:12px;color:#111;transform:scaleX(0.9540);">December FH</span></div>
<div style="left:1186.90px;top:259.32px;width:71.50px;height:19.58px;overflow:hidden;"><span class="t" style="left:1.40px;top:3.72px;font-size:12px;line-height:12px;color:#111;transform:scaleX(0.9650);">Dec-9-2024</span></div>
<div style="left:1340.90px;top:259.32px;width:78.60px;height:19.58px;overflow:hidden;"><span class="t" style="left:3.60px;top:3.72px;font-size:12px;line-height:12px;color:#111;transform:scaleX(0.9357);">Floor</span></div>
<div style="left:1420.90px;top:259.32px;width:65.40px;height:19.58px;overflow:hidden;"><span class="t" style="left:3.60px;top:3.72px;font-size:12px;line-height:12px;color:#111;transform:scaleX(0.9570);">18019.29 kg</span></div>
<div style="left:245.00px;top:300.00px;width:1242.00px;height:1.00px;background:#222;"></div>
<div style="left:245.00px;top:301.00px;width:1242.00px;height:1.00px;background:rgba(0,0,0,0.38);"></div>
<div style="left:240.50px;top:300.08px;width:4.00px;height:1.00px;background:#dadada;"></div>
<div style="left:265.30px;top:280.30px;width:76.80px;height:19.58px;overflow:hidden;"><span class="t" style="left:3.60px;top:3.72px;font-size:12px;line-height:12px;color:#111;transform:scaleX(0.9017);">BIG MEAT CO</span></div>
<div style="left:343.50px;top:280.30px;width:78.60px;height:19.58px;overflow:hidden;"><span class="t" style="left:1.30px;top:3.72px;font-size:12px;line-height:12px;color:#1a0dff;text-decoration:underline;transform:scaleX(0.9570);">BMCO-265130</span></div>
<div style="left:501.30px;top:280.30px;width:74.60px;height:19.58px;overflow:hidden;"><span class="t" style="left:3.60px;top:3.72px;font-size:12px;line-height:12px;color:#111;transform:scaleX(0.9619);">Planning</span></div>
<div style="left:577.30px;top:280.30px;width:87.60px;height:19.58px;overflow:hidden;"><span class="t" style="left:3.60px;top:3.72px;font-size:12px;line-height:12px;color:#111;transform:scaleX(0.9906);">Confirmed</span></div>
<div style="left:666.30px;top:280.30px;width:94.70px;height:19.58px;overflow:hidden;"><span class="t" style="left:3.60px;top:3.72px;font-size:12px;line-height:12px;color:#111;transform:scaleX(0.9218);">Frozen</span></div>
<div style="left:762.40px;top:280.30px;width:47.40px;height:19.58px;overflow:hidden;"><span class="t" style="left:3.60px;top:3.72px;font-size:12px;line-height:12px;color:#111;transform:scaleX(1.0156);">No</span></div>
<div style="left:811.20px;top:280.30px;width:130.20px;height:19.58px;overflow:hidden;"><span class="t" style="left:3.60px;top:3.72px;font-size:12px;line-height:12px;color:#111;transform:scaleX(1.0156);">No</span></div>
<div style="left:942.80px;top:280.30px;width:62.90px;height:19.58px;overflow:hidden;"><span class="t" style="left:3.60px;top:3.72px;font-size:12px;line-height:12px;color:#111;transform:scaleX(0.9320);">Plant</span></div>
<div style="left:1007.10px;top:280.30px;width:84.50px;height:19.58px;overflow:hidden;"><span class="t" style="left:3.60px;top:3.72px;font-size:12px;line-height:12px;color:#111;transform:scaleX(0.8804);">Busan, KR</span></div>
<div style="left:1093.00px;top:280.30px;width:92.50px;height:19.58px;overflow:hidden;"><span class="t" style="left:3.60px;top:3.72px;font-size:12px;line-height:12px;color:#111;transform:scaleX(0.9540);">December LH</span></div>
<div style="left:1186.90px;top:280.30px;width:71.50px;height:19.58px;overflow:hidden;"><span class="t" style="left:1.40px;top:3.72px;font-size:12px;line-height:12px;color:#111;transform:scaleX(0.9650);">Dec-16-2024</span></div>
<div style="left:1340.90px;top:280.30px;width:78.60px;height:19.58px;overflow:hidden;"><span class="t" style="left:3.60px;top:3.72px;font-size:12px;line-height:12px;color:#111;transform:scaleX(0.9357);">Floor</span></div>
<div style="left:1420.90px;top:280.30px;width:65.40px;height:19.58px;overflow:hidden;"><span class="t" style="left:3.60px;top:3.72px;font-size:12px;line-height:12px;color:#111;transform:scaleX(0.9570);">14193.28 kg</span></div>
<div style="left:245.00px;top:321.00px;width:1242.00px;height:1.00px;background:#222;"></div>
<div style="left:245.00px;top:322.00px;width:1242.00px;height:1.00px;background:rgba(0,0,0,0.38);"></div>
<div style="left:240.50px;top:321.06px;width:4.00px;height:1.00px;background:#dadada;"></div>
<div style="left:265.30px;top:301.28px;width:76.80px;height:19.58px;overflow:hidden;"><span class="t" style="left:3.60px;top:3.72px;font-size:12px;line-height:12px;color:#111;transform:scaleX(0.9017);">BIG MEAT CO</span></div>
<div style="left:343.50px;top:301.28px;width:78.60px;height:19.58px;overflow:hidden;"><span class="t" style="left:1.30px;top:3.72px;font-size:12px;line-height:12px;color:#1a0dff;text-decoration:underline;transform:scaleX(0.9570);">BMCO-265131</span></div>
<div style="left:501.30px;top:301.28px;width:74.60px;height:19.58px;overflow:hidden;"><span class="t" style="left:3.60px;top:3.72px;font-size:12px;line-height:12px;color:#111;transform:scaleX(0.9619);">Planning</span></div>
<div style="left:577.30px;top:301.28px;width:87.60px;height:19.58px;overflow:hidden;"><span class="t" style="left:3.60px;top:3.72px;font-size:12px;line-height:12px;color:#111;transform:scaleX(0.9906);">Confirmed</span></div>
<div style="left:666.30px;top:301.28px;width:94.70px;height:19.58px;overflow:hidden;"><span class="t" style="left:3.60px;top:3.72px;font-size:12px;line-height:12px;color:#111;transform:scaleX(0.9218);">Frozen</span></div>
<div style="left:762.40px;top:301.28px;width:47.40px;height:19.58px;overflow:hidden;"><span class="t" style="left:3.60px;top:3.72px;font-size:12px;line-height:12px;color:#111;transform:scaleX(1.0156);">No</span></div>
<div style="left:811.20px;top:301.28px;width:130.20px;height:19.58px;overflow:hidden;"><span class="t" style="left:3.60px;top:3.72px;font-size:12px;line-height:12px;color:#111;transform:scaleX(1.0156);">No</span></div>
<div style="left:942.80px;top:301.28px;width:62.90px;height:19.58px;overflow:hidden;"><span class="t" style="left:3.60px;top:3.72px;font-size:12px;line-height:12px;color:#111;transform:scaleX(0.9320);">Plant</span></div>
<div style="left:1007.10px;top:301.28px;width:84.50px;height:19.58px;overflow:hidden;"><span class="t" style="left:3.60px;top:3.72px;font-size:12px;line-height:12px;color:#111;transform:scaleX(0.8804);">Busan, KR</span></div>
<div style="left:1093.00px;top:301.28px;width:92.50px;height:19.58px;overflow:hidden;"><span class="t" style="left:3.60px;top:3.72px;font-size:12px;line-height:12px;color:#111;transform:scaleX(0.9540);">December LH</span></div>
<div style="left:1186.90px;top:301.28px;width:71.50px;height:19.58px;overflow:hidden;"><span class="t" style="left:1.40px;top:3.72px;font-size:12px;line-height:12px;color:#111;transform:scaleX(0.9650);">Dec-31-2024</span></div>
<div style="left:1340.90px;top:301.28px;width:78.60px;height:19.58px;overflow:hidden;"><span class="t" style="left:3.60px;top:3.72px;font-size:12px;line-height:12px;color:#111;transform:scaleX(0.9357);">Floor</span></div>
<div style="left:1420.90px;top:301.28px;width:65.40px;height:19.58px;overflow:hidden;"><span class="t" style="left:3.60px;top:3.72px;font-size:12px;line-height:12px;color:#111;transform:scaleX(0.9570);">17525.61 kg</span></div>
<div style="left:245.00px;top:342.00px;width:1242.00px;height:1.00px;background:#222;"></div>
<div style="left:245.00px;top:343.00px;width:1242.00px;height:1.00px;background:rgba(0,0,0,0.38);"></div>
<div style="left:240.50px;top:342.04px;width:4.00px;height:1.00px;background:#dadada;"></div>
<div style="left:265.30px;top:322.26px;width:76.80px;height:19.58px;overflow:hidden;"><span class="t" style="left:3.60px;top:3.72px;font-size:12px;line-height:12px;color:#111;transform:scaleX(0.9017);">BIG MEAT CO</span></div>
<div style="left:343.50px;top:322.26px;width:78.60px;height:19.58px;overflow:hidden;"><span class="t" style="left:1.30px;top:3.72px;font-size:12px;line-height:12px;color:#1a0dff;text-decoration:underline;transform:scaleX(0.9570);">BMCO-265133</span></div>
<div style="left:501.30px;top:322.26px;width:74.60px;height:19.58px;overflow:hidden;"><span class="t" style="left:3.60px;top:3.72px;font-size:12px;line-height:12px;color:#111;transform:scaleX(0.9619);">Planning</span></div>
<div style="left:577.30px;top:322.26px;width:87.60px;height:19.58px;overflow:hidden;"><span class="t" style="left:3.60px;top:3.72px;font-size:12px;line-height:12px;color:#111;transform:scaleX(0.9906);">Confirmed</span></div>
<div style="left:666.30px;top:322.26px;width:94.70px;height:19.58px;overflow:hidden;"><span class="t" style="left:3.60px;top:3.72px;font-size:12px;line-height:12px;color:#111;transform:scaleX(0.9218);">Frozen</span></div>
<div style="left:762.40px;top:322.26px;width:47.40px;height:19.58px;overflow:hidden;"><span class="t" style="left:3.60px;top:3.72px;font-size:12px;line-height:12px;color:#111;transform:scaleX(1.0156);">No</span></div>
<div style="left:811.20px;top:322.26px;width:130.20px;height:19.58px;overflow:hidden;"><span class="t" style="left:3.60px;top:3.72px;font-size:12px;line-height:12px;color:#111;transform:scaleX(1.0156);">No</span></div>
<div style="left:942.80px;top:322.26px;width:62.90px;height:19.58px;overflow:hidden;"><span class="t" style="left:3.60px;top:3.72px;font-size:12px;line-height:12px;color:#111;transform:scaleX(0.9320);">Plant</span></div>
<div style="left:1007.10px;top:322.26px;width:84.50px;height:19.58px;overflow:hidden;"><span class="t" style="left:3.60px;top:3.72px;font-size:12px;line-height:12px;color:#111;transform:scaleX(0.8804);">Busan, KR</span></div>
<div style="left:1093.00px;top:322.26px;width:92.50px;height:19.58px;overflow:hidden;"><span class="t" style="left:3.60px;top:3.72px;font-size:12px;line-height:12px;color:#111;transform:scaleX(0.9540);">December LH</span></div>
<div style="left:1186.90px;top:322.26px;width:71.50px;height:19.58px;overflow:hidden;"><span class="t" style="left:1.40px;top:3.72px;font-size:12px;line-height:12px;color:#111;transform:scaleX(0.9650);">Dec-30-2024</span></div>
<div style="left:1340.90px;top:322.26px;width:78.60px;height:19.58px;overflow:hidden;"><span class="t" style="left:3.60px;top:3.72px;font-size:12px;line-height:12px;color:#111;transform:scaleX(0.9357);">Floor</span></div>
<div style="left:1420.90px;top:322.26px;width:65.40px;height:19.58px;overflow:hidden;"><span class="t" style="left:3.60px;top:3.72px;font-size:12px;line-height:12px;color:#111;transform:scaleX(0.9570);">18105.00 kg</span></div>
<div style="left:245.00px;top:363.00px;width:1242.00px;height:1.00px;background:#222;"></div>
<div style="left:245.00px;top:364.00px;width:1242.00px;height:1.00px;background:rgba(0,0,0,0.38);"></div>
<div style="left:240.50px;top:363.02px;width:4.00px;height:1.00px;background:#dadada;"></div>
<div style="left:265.30px;top:343.24px;width:76.80px;height:19.58px;overflow:hidden;"><span class="t" style="left:3.60px;top:3.72px;font-size:12px;line-height:12px;color:#111;transform:scaleX(0.9017);">BIG MEAT CO</span></div>
<div style="left:343.50px;top:343.24px;width:78.60px;height:19.58px;overflow:hidden;"><span class="t" style="left:1.30px;top:3.72px;font-size:12px;line-height:12px;color:#1a0dff;text-decoration:underline;transform:scaleX(0.9570);">BMCO-265134</span></div>
<div style="left:501.30px;top:343.24px;width:74.60px;height:19.58px;overflow:hidden;"><span class="t" style="left:3.60px;top:3.72px;font-size:12px;line-height:12px;color:#111;transform:scaleX(0.9619);">Planning</span></div>
<div style="left:577.30px;top:343.24px;width:87.60px;height:19.58px;overflow:hidden;"><span class="t" style="left:3.60px;top:3.72px;font-size:12px;line-height:12px;color:#111;transform:scaleX(0.9906);">Confirmed</span></div>
<div style="left:666.30px;top:343.24px;width:94.70px;height:19.58px;overflow:hidden;"><span class="t" style="left:3.60px;top:3.72px;font-size:12px;line-height:12px;color:#111;transform:scaleX(0.9218);">Frozen</span></div>
<div style="left:762.40px;top:343.24px;width:47.40px;height:19.58px;overflow:hidden;"><span class="t" style="left:3.60px;top:3.72px;font-size:12px;line-height:12px;color:#111;transform:scaleX(1.0156);">No</span></div>
<div style="left:811.20px;top:343.24px;width:130.20px;height:19.58px;overflow:hidden;"><span class="t" style="left:3.60px;top:3.72px;font-size:12px;line-height:12px;color:#111;transform:scaleX(1.0156);">No</span></div>
<div style="left:942.80px;top:343.24px;width:62.90px;height:19.58px;overflow:hidden;"><span class="t" style="left:3.60px;top:3.72px;font-size:12px;line-height:12px;color:#111;transform:scaleX(0.9320);">Plant</span></div>
<div style="left:1007.10px;top:343.24px;width:84.50px;height:19.58px;overflow:hidden;"><span class="t" style="left:3.60px;top:3.72px;font-size:12px;line-height:12px;color:#111;transform:scaleX(0.8804);">Busan, KR</span></div>
<div style="left:1093.00px;top:343.24px;width:92.50px;height:19.58px;overflow:hidden;"><span class="t" style="left:3.60px;top:3.72px;font-size:12px;line-height:12px;color:#111;transform:scaleX(0.9540);">December LH</span></div>
<div style="left:1186.90px;top:343.24px;width:71.50px;height:19.58px;overflow:hidden;"><span class="t" style="left:1.40px;top:3.72px;font-size:12px;line-height:12px;color:#111;transform:scaleX(0.9650);">Dec-30-2024</span></div>
<div style="left:1340.90px;top:343.24px;width:78.60px;height:19.58px;overflow:hidden;"><span class="t" style="left:3.60px;top:3.72px;font-size:12px;line-height:12px;color:#111;transform:scaleX(0.9357);">Floor</span></div>
<div style="left:1420.90px;top:343.24px;width:65.40px;height:19.58px;overflow:hidden;"><span class="t" style="left:3.60px;top:3.72px;font-size:12px;line-height:12px;color:#111;transform:scaleX(0.9570);">11825.00 kg</span></div>
<div style="left:245.00px;top:384.00px;width:1242.00px;height:1.00px;background:#222;"></div>
<div style="left:245.00px;top:385.00px;width:1242.00px;height:1.00px;background:rgba(0,0,0,0.38);"></div>
<div style="left:240.50px;top:384.00px;width:4.00px;height:1.00px;background:#dadada;"></div>
<div style="left:265.30px;top:364.22px;width:76.80px;height:19.58px;overflow:hidden;"><span class="t" style="left:3.60px;top:3.72px;font-size:12px;line-height:12px;color:#111;transform:scaleX(0.9017);">BIG MEAT CO</span></div>
<div style="left:343.50px;top:364.22px;width:78.60px;height:19.58px;overflow:hidden;"><span class="t" style="left:1.30px;top:3.72px;font-size:12px;line-height:12px;color:#1a0dff;text-decoration:underline;transform:scaleX(0.9570);">BMCO-266181</span></div>
<div style="left:423.50px;top:364.22px;width:76.40px;height:19.58px;overflow:hidden;"><span class="t" style="left:3.60px;top:3.72px;font-size:12px;line-height:12px;color:#111;transform:scaleX(0.9750);">INN266181</span></div>
<div style="left:501.30px;top:364.22px;width:74.60px;height:19.58px;overflow:hidden;"><span class="t" style="left:3.60px;top:3.72px;font-size:12px;line-height:12px;color:#111;transform:scaleX(0.9619);">Planning</span></div>
<div style="left:577.30px;top:364.22px;width:87.60px;height:19.58px;overflow:hidden;"><span class="t" style="left:3.60px;top:3.72px;font-size:12px;line-height:12px;color:#111;transform:scaleX(0.9906);">Confirmed</span></div>
<div style="left:666.30px;top:364.22px;width:94.70px;height:19.58px;overflow:hidden;"><span class="t" style="left:3.60px;top:3.72px;font-size:12px;line-height:12px;color:#111;transform:scaleX(0.9218);">Frozen</span></div>
<div style="left:762.40px;top:364.22px;width:47.40px;height:19.58px;overflow:hidden;"><span class="t" style="left:3.60px;top:3.72px;font-size:12px;line-height:12px;color:#111;transform:scaleX(1.0156);">No</span></div>
<div style="left:811.20px;top:364.22px;width:130.20px;height:19.58px;overflow:hidden;"><span class="t" style="left:3.60px;top:3.72px;font-size:12px;line-height:12px;color:#111;transform:scaleX(1.0156);">No</span></div>
<div style="left:942.80px;top:364.22px;width:62.90px;height:19.58px;overflow:hidden;"><span class="t" style="left:3.60px;top:3.72px;font-size:12px;line-height:12px;color:#111;transform:scaleX(0.9320);">Plant</span></div>
<div style="left:1007.10px;top:364.22px;width:84.50px;height:19.58px;overflow:hidden;"><span class="t" style="left:3.60px;top:3.72px;font-size:12px;line-height:12px;color:#111;transform:scaleX(0.8804);">Busan, KR</span></div>
<div style="left:1093.00px;top:364.22px;width:92.50px;height:19.58px;overflow:hidden;"><span class="t" style="left:3.60px;top:3.72px;font-size:12px;line-height:12px;color:#111;transform:scaleX(0.9540);">December LH</span></div>
<div style="left:1186.90px;top:364.22px;width:71.50px;height:19.58px;overflow:hidden;"><span class="t" style="left:1.40px;top:3.72px;font-size:12px;line-height:12px;color:#111;transform:scaleX(0.9650);">Dec-18-2024</span></div>
<div style="left:1259.80px;top:364.22px;width:79.70px;height:19.58px;overflow:hidden;"><span class="t" style="left:1.40px;top:3.72px;font-size:12px;line-height:12px;color:#111;transform:scaleX(0.9650);">Dec-30-2024</span></div>
<div style="left:1340.90px;top:364.22px;width:78.60px;height:19.58px;overflow:hidden;"><span class="t" style="left:3.60px;top:3.72px;font-size:12px;line-height:12px;color:#111;transform:scaleX(0.9357);">Floor</span></div>
<div style="left:1420.90px;top:364.22px;width:65.40px;height:19.58px;overflow:hidden;"><span class="t" style="left:3.60px;top:3.72px;font-size:12px;line-height:12px;color:#111;transform:scaleX(0.9570);">17119.16 kg</span></div>
<div style="left:245.00px;top:405.00px;width:1242.00px;height:1.00px;background:#222;"></div>
<div style="left:245.00px;top:406.00px;width:1242.00px;height:1.00px;background:rgba(0,0,0,0.38);"></div>
<div style="left:240.50px;top:404.98px;width:4.00px;height:1.00px;background:#dadada;"></div>
<div style="left:265.30px;top:385.20px;width:76.80px;height:19.58px;overflow:hidden;"><span class="t" style="left:3.60px;top:3.72px;font-size:12px;line-height:12px;color:#111;transform:scaleX(0.9017);">BIG MEAT CO</span></div>
<div style="left:343.50px;top:385.20px;width:78.60px;height:19.58px;overflow:hidden;"><span class="t" style="left:1.30px;top:3.72px;font-size:12px;line-height:12px;color:#1a0dff;text-decoration:underline;transform:scaleX(0.9570);">BMCO-266182</span></div>
<div style="left:501.30px;top:385.20px;width:74.60px;height:19.58px;overflow:hidden;"><span class="t" style="left:3.60px;top:3.72px;font-size:12px;line-height:12px;color:#111;transform:scaleX(0.9619);">Planning</span></div>
<div style="left:577.30px;top:385.20px;width:87.60px;height:19.58px;overflow:hidden;"><span class="t" style="left:3.60px;top:3.72px;font-size:12px;line-height:12px;color:#111;transform:scaleX(0.9906);">Confirmed</span></div>
<div style="left:666.30px;top:385.20px;width:94.70px;height:19.58px;overflow:hidden;"><span class="t" style="left:3.60px;top:3.72px;font-size:12px;line-height:12px;color:#111;transform:scaleX(0.9218);">Frozen</span></div>
<div style="left:762.40px;top:385.20px;width:47.40px;height:19.58px;overflow:hidden;"><span class="t" style="left:3.60px;top:3.72px;font-size:12px;line-height:12px;color:#111;transform:scaleX(1.0156);">No</span></div>
<div style="left:811.20px;top:385.20px;width:130.20px;height:19.58px;overflow:hidden;"><span class="t" style="left:3.60px;top:3.72px;font-size:12px;line-height:12px;color:#111;transform:scaleX(1.0156);">No</span></div>
<div style="left:942.80px;top:385.20px;width:62.90px;height:19.58px;overflow:hidden;"><span class="t" style="left:3.60px;top:3.72px;font-size:12px;line-height:12px;color:#111;transform:scaleX(0.9320);">Plant</span></div>
<div style="left:1007.10px;top:385.20px;width:84.50px;height:19.58px;overflow:hidden;"><span class="t" style="left:3.60px;top:3.72px;font-size:12px;line-height:12px;color:#111;transform:scaleX(0.8804);">Busan, KR</span></div>
<div style="left:1093.00px;top:385.20px;width:92.50px;height:19.58px;overflow:hidden;"><span class="t" style="left:3.60px;top:3.72px;font-size:12px;line-height:12px;color:#111;transform:scaleX(0.9540);">December LH</span></div>
<div style="left:1186.90px;top:385.20px;width:71.50px;height:19.58px;overflow:hidden;"><span class="t" style="left:1.40px;top:3.72px;font-size:12px;line-height:12px;color:#111;transform:scaleX(0.9650);">Dec-23-2024</span></div>
<div style="left:1340.90px;top:385.20px;width:78.60px;height:19.58px;overflow:hidden;"><span class="t" style="left:3.60px;top:3.72px;font-size:12px;line-height:12px;color:#111;transform:scaleX(0.9357);">Floor</span></div>
<div style="left:1420.90px;top:385.20px;width:65.40px;height:19.58px;overflow:hidden;"><span class="t" style="left:3.60px;top:3.72px;font-size:12px;line-height:12px;color:#111;transform:scaleX(0.9570);">11864.36 kg</span></div>
<div style="left:245.00px;top:426.00px;width:1242.00px;height:1.00px;background:#222;"></div>
<div style="left:245.00px;top:427.00px;width:1242.00px;height:1.00px;background:rgba(0,0,0,0.38);"></div>
<div style="left:240.50px;top:425.96px;width:4.00px;height:1.00px;background:#dadada;"></div>
<div style="left:265.30px;top:406.18px;width:76.80px;height:19.58px;overflow:hidden;"><span class="t" style="left:3.60px;top:3.72px;font-size:12px;line-height:12px;color:#111;transform:scaleX(0.9017);">BIG MEAT CO</span></div>
<div style="left:343.50px;top:406.18px;width:78.60px;height:19.58px;overflow:hidden;"><span class="t" style="left:1.30px;top:3.72px;font-size:12px;line-height:12px;color:#1a0dff;text-decoration:underline;transform:scaleX(0.9570);">BMCO-266183</span></div>
<div style="left:423.50px;top:406.18px;width:76.40px;height:19.58px;overflow:hidden;"><span class="t" style="left:3.60px;top:3.72px;font-size:12px;line-height:12px;color:#111;transform:scaleX(0.9750);">INN266183</span></div>
<div style="left:501.30px;top:406.18px;width:74.60px;height:19.58px;overflow:hidden;"><span class="t" style="left:3.60px;top:3.72px;font-size:12px;line-height:12px;color:#111;transform:scaleX(0.9619);">Planning</span></div>
<div style="left:577.30px;top:406.18px;width:87.60px;height:19.58px;overflow:hidden;"><span class="t" style="left:3.60px;top:3.72px;font-size:12px;line-height:12px;color:#111;transform:scaleX(0.9906);">Confirmed</span></div>
<div style="left:666.30px;top:406.18px;width:94.70px;height:19.58px;overflow:hidden;"><span class="t" style="left:3.60px;top:3.72px;font-size:12px;line-height:12px;color:#111;transform:scaleX(0.9218);">Frozen</span></div>
<div style="left:762.40px;top:406.18px;width:47.40px;height:19.58px;overflow:hidden;"><span class="t" style="left:3.60px;top:3.72px;font-size:12px;line-height:12px;color:#111;transform:scaleX(1.0156);">No</span></div>
<div style="left:811.20px;top:406.18px;width:130.20px;height:19.58px;overflow:hidden;"><span class="t" style="left:3.60px;top:3.72px;font-size:12px;line-height:12px;color:#111;transform:scaleX(1.0156);">No</span></div>
<div style="left:942.80px;top:406.18px;width:62.90px;height:19.58px;overflow:hidden;"><span class="t" style="left:3.60px;top:3.72px;font-size:12px;line-height:12px;color:#111;transform:scaleX(0.9550);">Versa Wpg</span></div>
<div style="left:1007.10px;top:406.18px;width:84.50px;height:19.58px;overflow:hidden;"><span class="t" style="left:3.60px;top:3.72px;font-size:12px;line-height:12px;color:#111;transform:scaleX(0.8804);">Busan, KR</span></div>
<div style="left:1093.00px;top:406.18px;width:92.50px;height:19.58px;overflow:hidden;"><span class="t" style="left:3.60px;top:3.72px;font-size:12px;line-height:12px;color:#111;transform:scaleX(0.9540);">March FH</span></div>
<div style="left:1186.90px;top:406.18px;width:71.50px;height:19.58px;overflow:hidden;"><span class="t" style="left:1.40px;top:3.72px;font-size:12px;line-height:12px;color:#111;transform:scaleX(0.9650);">Mar-14-2025</span></div>
<div style="left:1340.90px;top:406.18px;width:78.60px;height:19.58px;overflow:hidden;"><span class="t" style="left:3.60px;top:3.72px;font-size:12px;line-height:12px;color:#111;transform:scaleX(0.9357);">Floor</span></div>
<div style="left:1420.90px;top:406.18px;width:65.40px;height:19.58px;overflow:hidden;"><span class="t" style="left:3.60px;top:3.72px;font-size:12px;line-height:12px;color:#111;transform:scaleX(0.9570);">13246.48 kg</span></div>
<div style="left:245.00px;top:447.00px;width:1242.00px;height:1.00px;background:#222;"></div>
<div style="left:245.00px;top:448.00px;width:1242.00px;height:1.00px;background:rgba(0,0,0,0.38);"></div>
<div style="left:240.50px;top:446.94px;width:4.00px;height:1.00px;background:#dadada;"></div>
<div style="left:265.30px;top:427.16px;width:76.80px;height:19.58px;overflow:hidden;"><span class="t" style="left:3.60px;top:3.72px;font-size:12px;line-height:12px;color:#111;transform:scaleX(0.9017);">BIG MEAT CO</span></div>
<div style="left:343.50px;top:427.16px;width:78.60px;height:19.58px;overflow:hidden;"><span class="t" style="left:1.30px;top:3.72px;font-size:12px;line-height:12px;color:#1a0dff;text-decoration:underline;transform:scaleX(0.9570);">BMCO-266184</span></div>
<div style="left:501.30px;top:427.16px;width:74.60px;height:19.58px;overflow:hidden;"><span class="t" style="left:3.60px;top:3.72px;font-size:12px;line-height:12px;color:#111;transform:scaleX(0.9619);">Planning</span></div>
<div style="left:577.30px;top:427.16px;width:87.60px;height:19.58px;overflow:hidden;"><span class="t" style="left:3.60px;top:3.72px;font-size:12px;line-height:12px;color:#111;transform:scaleX(0.9906);">Confirmed</span></div>
<div style="left:666.30px;top:427.16px;width:94.70px;height:19.58px;overflow:hidden;"><span class="t" style="left:3.60px;top:3.72px;font-size:12px;line-height:12px;color:#111;transform:scaleX(0.9218);">Frozen</span></div>
<div style="left:762.40px;top:427.16px;width:47.40px;height:19.58px;overflow:hidden;"><span class="t" style="left:3.60px;top:3.72px;font-size:12px;line-height:12px;color:#111;transform:scaleX(1.0156);">No</span></div>
<div style="left:811.20px;top:427.16px;width:130.20px;height:19.58px;overflow:hidden;"><span class="t" style="left:3.60px;top:3.72px;font-size:12px;line-height:12px;color:#111;transform:scaleX(1.0156);">No</span></div>
<div style="left:942.80px;top:427.16px;width:62.90px;height:19.58px;overflow:hidden;"><span class="t" style="left:3.60px;top:3.72px;font-size:12px;line-height:12px;color:#111;transform:scaleX(0.9320);">Plant</span></div>
<div style="left:1007.10px;top:427.16px;width:84.50px;height:19.58px;overflow:hidden;"><span class="t" style="left:3.60px;top:3.72px;font-size:12px;line-height:12px;color:#111;transform:scaleX(0.8804);">Busan, KR</span></div>
<div style="left:1093.00px;top:427.16px;width:92.50px;height:19.58px;overflow:hidden;"><span class="t" style="left:3.60px;top:3.72px;font-size:12px;line-height:12px;color:#111;transform:scaleX(0.9540);">January FH</span></div>
<div style="left:1186.90px;top:427.16px;width:71.50px;height:19.58px;overflow:hidden;"><span class="t" style="left:1.40px;top:3.72px;font-size:12px;line-height:12px;color:#111;transform:scaleX(0.9650);">Jan-13-2025</span></div>
<div style="left:1340.90px;top:427.16px;width:78.60px;height:19.58px;overflow:hidden;"><span class="t" style="left:3.60px;top:3.72px;font-size:12px;line-height:12px;color:#111;transform:scaleX(0.9357);">Floor</span></div>
<div style="left:1420.90px;top:427.16px;width:65.40px;height:19.58px;overflow:hidden;"><span class="t" style="left:3.60px;top:3.72px;font-size:12px;line-height:12px;color:#111;transform:scaleX(0.9570);">18049.70 kg</span></div>
<div style="left:245.00px;top:468.00px;width:1242.00px;height:1.00px;background:#222;"></div>
<div style="left:245.00px;top:469.00px;width:1242.00px;height:1.00px;background:rgba(0,0,0,0.38);"></div>
<div style="left:240.50px;top:467.92px;width:4.00px;height:1.00px;background:#dadada;"></div>
<div style="left:265.30px;top:448.14px;width:76.80px;height:19.58px;overflow:hidden;"><span class="t" style="left:3.60px;top:3.72px;font-size:12px;line-height:12px;color:#111;transform:scaleX(0.9017);">BIG MEAT CO</span></div>
<div style="left:343.50px;top:448.14px;width:78.60px;height:19.58px;overflow:hidden;"><span class="t" style="left:1.30px;top:3.72px;font-size:12px;line-height:12px;color:#1a0dff;text-decoration:underline;transform:scaleX(0.9570);">BMCO-266185</span></div>
<div style="left:501.30px;top:448.14px;width:74.60px;height:19.58px;overflow:hidden;"><span class="t" style="left:3.60px;top:3.72px;font-size:12px;line-height:12px;color:#111;transform:scaleX(0.9619);">Planning</span></div>
<div style="left:577.30px;top:448.14px;width:87.60px;height:19.58px;overflow:hidden;"><span class="t" style="left:3.60px;top:3.72px;font-size:12px;line-height:12px;color:#111;transform:scaleX(0.9906);">Confirmed</span></div>
<div style="left:666.30px;top:448.14px;width:94.70px;height:19.58px;overflow:hidden;"><span class="t" style="left:3.60px;top:3.72px;font-size:12px;line-height:12px;color:#111;transform:scaleX(0.9218);">Frozen</span></div>
<div style="left:762.40px;top:448.14px;width:47.40px;height:19.58px;overflow:hidden;"><span class="t" style="left:3.60px;top:3.72px;font-size:12px;line-height:12px;color:#111;transform:scaleX(1.0156);">No</span></div>
<div style="left:811.20px;top:448.14px;width:130.20px;height:19.58px;overflow:hidden;"><span class="t" style="left:3.60px;top:3.72px;font-size:12px;line-height:12px;color:#111;transform:scaleX(1.0156);">No</span></div>
<div style="left:942.80px;top:448.14px;width:62.90px;height:19.58px;overflow:hidden;"><span class="t" style="left:3.60px;top:3.72px;font-size:12px;line-height:12px;color:#111;transform:scaleX(0.9320);">Plant</span></div>
<div style="left:1007.10px;top:448.14px;width:84.50px;height:19.58px;overflow:hidden;"><span class="t" style="left:3.60px;top:3.72px;font-size:12px;line-height:12px;color:#111;transform:scaleX(0.8804);">Busan, KR</span></div>
<div style="left:1093.00px;top:448.14px;width:92.50px;height:19.58px;overflow:hidden;"><span class="t" style="left:3.60px;top:3.72px;font-size:12px;line-height:12px;color:#111;transform:scaleX(0.9540);">January FH</span></div>
<div style="left:1186.90px;top:448.14px;width:71.50px;height:19.58px;overflow:hidden;"><span class="t" style="left:1.40px;top:3.72px;font-size:12px;line-height:12px;color:#111;transform:scaleX(0.9650);">Jan-15-2025</span></div>
<div style="left:1340.90px;top:448.14px;width:78.60px;height:19.58px;overflow:hidden;"><span class="t" style="left:3.60px;top:3.72px;font-size:12px;line-height:12px;color:#111;transform:scaleX(0.9357);">Floor</span></div>
<div style="left:1420.90px;top:448.14px;width:65.40px;height:19.58px;overflow:hidden;"><span class="t" style="left:3.60px;top:3.72px;font-size:12px;line-height:12px;color:#111;transform:scaleX(0.9570);">16161.25 kg</span></div>
<div style="left:245.00px;top:489.00px;width:1242.00px;height:1.00px;background:#222;"></div>
<div style="left:245.00px;top:490.00px;width:1242.00px;height:1.00px;background:rgba(0,0,0,0.38);"></div>
<div style="left:240.50px;top:488.90px;width:4.00px;height:1.00px;background:#dadada;"></div>
<div style="left:265.30px;top:469.12px;width:76.80px;height:19.58px;overflow:hidden;"><span class="t" style="left:3.60px;top:3.72px;font-size:12px;line-height:12px;color:#111;transform:scaleX(0.9017);">BIG MEAT CO</span></div>
<div style="left:343.50px;top:469.12px;width:78.60px;height:19.58px;overflow:hidden;"><span class="t" style="left:1.30px;top:3.72px;font-size:12px;line-height:12px;color:#1a0dff;text-decoration:underline;transform:scaleX(0.9570);">BMCO-266186</span></div>
<div style="left:501.30px;top:469.12px;width:74.60px;height:19.58px;overflow:hidden;"><span class="t" style="left:3.60px;top:3.72px;font-size:12px;line-height:12px;color:#111;transform:scaleX(0.9619);">Planning</span></div>
<div style="left:577.30px;top:469.12px;width:87.60px;height:19.58px;overflow:hidden;"><span class="t" style="left:3.60px;top:3.72px;font-size:12px;line-height:12px;color:#111;transform:scaleX(0.9906);">Confirmed</span></div>
<div style="left:666.30px;top:469.12px;width:94.70px;height:19.58px;overflow:hidden;"><span class="t" style="left:3.60px;top:3.72px;font-size:12px;line-height:12px;color:#111;transform:scaleX(0.9218);">Frozen</span></div>
<div style="left:762.40px;top:469.12px;width:47.40px;height:19.58px;overflow:hidden;"><span class="t" style="left:3.60px;top:3.72px;font-size:12px;line-height:12px;color:#111;transform:scaleX(1.0156);">No</span></div>
<div style="left:811.20px;top:469.12px;width:130.20px;height:19.58px;overflow:hidden;"><span class="t" style="left:3.60px;top:3.72px;font-size:12px;line-height:12px;color:#111;transform:scaleX(1.0156);">No</span></div>
<div style="left:942.80px;top:469.12px;width:62.90px;height:19.58px;overflow:hidden;"><span class="t" style="left:3.60px;top:3.72px;font-size:12px;line-height:12px;color:#111;transform:scaleX(0.9320);">Plant</span></div>
<div style="left:1007.10px;top:469.12px;width:84.50px;height:19.58px;overflow:hidden;"><span class="t" style="left:3.60px;top:3.72px;font-size:12px;line-height:12px;color:#111;transform:scaleX(0.8804);">Busan, KR</span></div>
<div style="left:1093.00px;top:469.12px;width:92.50px;height:19.58px;overflow:hidden;"><span class="t" style="left:3.60px;top:3.72px;font-size:12px;line-height:12px;color:#111;transform:scaleX(0.9540);">January LH</span></div>
<div style="left:1186.90px;top:469.12px;width:71.50px;height:19.58px;overflow:hidden;"><span class="t" style="left:1.40px;top:3.72px;font-size:12px;line-height:12px;color:#111;transform:scaleX(0.9650);">Jan-20-2025</span></div>
<div style="left:1340.90px;top:469.12px;width:78.60px;height:19.58px;overflow:hidden;"><span class="t" style="left:3.60px;top:3.72px;font-size:12px;line-height:12px;color:#111;transform:scaleX(0.9357);">Floor</span></div>
<div style="left:1420.90px;top:469.12px;width:65.40px;height:19.58px;overflow:hidden;"><span class="t" style="left:3.60px;top:3.72px;font-size:12px;line-height:12px;color:#111;transform:scaleX(0.9570);">11604.35 kg</span></div>
<div style="left:245.00px;top:510.00px;width:1242.00px;height:1.00px;background:#222;"></div>
<div style="left:245.00px;top:511.00px;width:1242.00px;height:1.00px;background:rgba(0,0,0,0.38);"></div>
<div style="left:240.50px;top:509.88px;width:4.00px;height:1.00px;background:#dadada;"></div>
<div style="left:265.30px;top:490.10px;width:76.80px;height:19.58px;overflow:hidden;"><span class="t" style="left:3.60px;top:3.72px;font-size:12px;line-height:12px;color:#111;transform:scaleX(0.9017);">BIG MEAT CO</span></div>
<div style="left:343.50px;top:490.10px;width:78.60px;height:19.58px;overflow:hidden;"><span class="t" style="left:1.30px;top:3.72px;font-size:12px;line-height:12px;color:#1a0dff;text-decoration:underline;transform:scaleX(0.9570);">BMCO-266187</span></div>
<div style="left:501.30px;top:490.10px;width:74.60px;height:19.58px;overflow:hidden;"><span class="t" style="left:3.60px;top:3.72px;font-size:12px;line-height:12px;color:#111;transform:scaleX(0.9619);">Planning</span></div>
<div style="left:577.30px;top:490.10px;width:87.60px;height:19.58px;overflow:hidden;"><span class="t" style="left:3.60px;top:3.72px;font-size:12px;line-height:12px;color:#111;transform:scaleX(0.9906);">Confirmed</span></div>
<div style="left:666.30px;top:490.10px;width:94.70px;height:19.58px;overflow:hidden;"><span class="t" style="left:3.60px;top:3.72px;font-size:12px;line-height:12px;color:#111;transform:scaleX(0.9218);">Frozen</span></div>
<div style="left:762.40px;top:490.10px;width:47.40px;height:19.58px;overflow:hidden;"><span class="t" style="left:3.60px;top:3.72px;font-size:12px;line-height:12px;color:#111;transform:scaleX(1.0156);">No</span></div>
<div style="left:811.20px;top:490.10px;width:130.20px;height:19.58px;overflow:hidden;"><span class="t" style="left:3.60px;top:3.72px;font-size:12px;line-height:12px;color:#111;transform:scaleX(1.0156);">No</span></div>
<div style="left:942.80px;top:490.10px;width:62.90px;height:19.58px;overflow:hidden;"><span class="t" style="left:3.60px;top:3.72px;font-size:12px;line-height:12px;color:#111;transform:scaleX(0.9320);">Plant</span></div>
<div style="left:1007.10px;top:490.10px;width:84.50px;height:19.58px;overflow:hidden;"><span class="t" style="left:3.60px;top:3.72px;font-size:12px;line-height:12px;color:#111;transform:scaleX(0.8804);">Busan, KR</span></div>
<div style="left:1093.00px;top:490.10px;width:92.50px;height:19.58px;overflow:hidden;"><span class="t" style="left:3.60px;top:3.72px;font-size:12px;line-height:12px;color:#111;transform:scaleX(0.9540);">January LH</span></div>
<div style="left:1186.90px;top:490.10px;width:71.50px;height:19.58px;overflow:hidden;"><span class="t" style="left:1.40px;top:3.72px;font-size:12px;line-height:12px;color:#111;transform:scaleX(0.9650);">Jan-27-2025</span></div>
<div style="left:1340.90px;top:490.10px;width:78.60px;height:19.58px;overflow:hidden;"><span class="t" style="left:3.60px;top:3.72px;font-size:12px;line-height:12px;color:#111;transform:scaleX(0.9357);">Floor</span></div>
<div style="left:1420.90px;top:490.10px;width:65.40px;height:19.58px;overflow:hidden;"><span class="t" style="left:3.60px;top:3.72px;font-size:12px;line-height:12px;color:#111;transform:scaleX(0.9570);">15559.14 kg</span></div>
<div style="left:245.00px;top:531.00px;width:1242.00px;height:1.00px;background:#222;"></div>
<div style="left:245.00px;top:532.00px;width:1242.00px;height:1.00px;background:rgba(0,0,0,0.38);"></div>
<div style="left:240.50px;top:530.86px;width:4.00px;height:1.00px;background:#dadada;"></div>
<div style="left:265.30px;top:511.08px;width:76.80px;height:19.58px;overflow:hidden;"><span class="t" style="left:3.60px;top:3.72px;font-size:12px;line-height:12px;color:#111;transform:scaleX(0.9017);">BIG MEAT CO</span></div>
<div style="left:343.50px;top:511.08px;width:78.60px;height:19.58px;overflow:hidden;"><span class="t" style="left:1.30px;top:3.72px;font-size:12px;line-height:12px;color:#1a0dff;text-decoration:underline;transform:scaleX(0.9570);">BMCO-266188</span></div>
<div style="left:501.30px;top:511.08px;width:74.60px;height:19.58px;overflow:hidden;"><span class="t" style="left:3.60px;top:3.72px;font-size:12px;line-height:12px;color:#111;transform:scaleX(0.9619);">Planning</span></div>
<div style="left:577.30px;top:511.08px;width:87.60px;height:19.58px;overflow:hidden;"><span class="t" style="left:3.60px;top:3.72px;font-size:12px;line-height:12px;color:#111;transform:scaleX(0.9906);">Confirmed</span></div>
<div style="left:666.30px;top:511.08px;width:94.70px;height:19.58px;overflow:hidden;"><span class="t" style="left:3.60px;top:3.72px;font-size:12px;line-height:12px;color:#111;transform:scaleX(0.9218);">Frozen</span></div>
<div style="left:762.40px;top:511.08px;width:47.40px;height:19.58px;overflow:hidden;"><span class="t" style="left:3.60px;top:3.72px;font-size:12px;line-height:12px;color:#111;transform:scaleX(1.0156);">No</span></div>
<div style="left:811.20px;top:511.08px;width:130.20px;height:19.58px;overflow:hidden;"><span class="t" style="left:3.60px;top:3.72px;font-size:12px;line-height:12px;color:#111;transform:scaleX(1.0156);">No</span></div>
<div style="left:942.80px;top:511.08px;width:62.90px;height:19.58px;overflow:hidden;"><span class="t" style="left:3.60px;top:3.72px;font-size:12px;line-height:12px;color:#111;transform:scaleX(0.9320);">Plant</span></div>
<div style="left:1007.10px;top:511.08px;width:84.50px;height:19.58px;overflow:hidden;"><span class="t" style="left:3.60px;top:3.72px;font-size:12px;line-height:12px;color:#111;transform:scaleX(0.8804);">Busan, KR</span></div>
<div style="left:1093.00px;top:511.08px;width:92.50px;height:19.58px;overflow:hidden;"><span class="t" style="left:3.60px;top:3.72px;font-size:12px;line-height:12px;color:#111;transform:scaleX(0.9540);">February FH</span></div>
<div style="left:1186.90px;top:511.08px;width:71.50px;height:19.58px;overflow:hidden;"><span class="t" style="left:1.40px;top:3.72px;font-size:12px;line-height:12px;color:#111;transform:scaleX(0.9650);">Feb-3-2025</span></div>
<div style="left:1340.90px;top:511.08px;width:78.60px;height:19.58px;overflow:hidden;"><span class="t" style="left:3.60px;top:3.72px;font-size:12px;line-height:12px;color:#111;transform:scaleX(0.9357);">Floor</span></div>
<div style="left:1420.90px;top:511.08px;width:65.40px;height:19.58px;overflow:hidden;"><span class="t" style="left:3.60px;top:3.72px;font-size:12px;line-height:12px;color:#111;transform:scaleX(0.9570);">13985.44 kg</span></div>
<div style="left:245.00px;top:552.00px;width:1242.00px;height:1.00px;background:#222;"></div>
<div style="left:245.00px;top:553.00px;width:1242.00px;height:1.00px;background:rgba(0,0,0,0.38);"></div>
<div style="left:240.50px;top:551.84px;width:4.00px;height:1.00px;background:#dadada;"></div>
<div style="left:265.30px;top:532.06px;width:76.80px;height:19.58px;overflow:hidden;"><span class="t" style="left:3.60px;top:3.72px;font-size:12px;line-height:12px;color:#111;transform:scaleX(0.9017);">BIG MEAT CO</span></div>
<div style="left:343.50px;top:532.06px;width:78.60px;height:19.58px;overflow:hidden;"><span class="t" style="left:1.30px;top:3.72px;font-size:12px;line-height:12px;color:#1a0dff;text-decoration:underline;transform:scaleX(0.9570);">BMCO-266189</span></div>
<div style="left:501.30px;top:532.06px;width:74.60px;height:19.58px;overflow:hidden;"><span class="t" style="left:3.60px;top:3.72px;font-size:12px;line-height:12px;color:#111;transform:scaleX(0.9619);">Planning</span></div>
<div style="left:577.30px;top:532.06px;width:87.60px;height:19.58px;overflow:hidden;"><span class="t" style="left:3.60px;top:3.72px;font-size:12px;line-height:12px;color:#111;transform:scaleX(0.9906);">Confirmed</span></div>
<div style="left:666.30px;top:532.06px;width:94.70px;height:19.58px;overflow:hidden;"><span class="t" style="left:3.60px;top:3.72px;font-size:12px;line-height:12px;color:#111;transform:scaleX(0.9218);">Frozen</span></div>
<div style="left:762.40px;top:532.06px;width:47.40px;height:19.58px;overflow:hidden;"><span class="t" style="left:3.60px;top:3.72px;font-size:12px;line-height:12px;color:#111;transform:scaleX(1.0156);">No</span></div>
<div style="left:811.20px;top:532.06px;width:130.20px;height:19.58px;overflow:hidden;"><span class="t" style="left:3.60px;top:3.72px;font-size:12px;line-height:12px;color:#111;transform:scaleX(1.0156);">No</span></div>
<div style="left:942.80px;top:532.06px;width:62.90px;height:19.58px;overflow:hidden;"><span class="t" style="left:3.60px;top:3.72px;font-size:12px;line-height:12px;color:#111;transform:scaleX(0.9320);">Plant</span></div>
<div style="left:1007.10px;top:532.06px;width:84.50px;height:19.58px;overflow:hidden;"><span class="t" style="left:3.60px;top:3.72px;font-size:12px;line-height:12px;color:#111;transform:scaleX(0.8804);">Busan, KR</span></div>
<div style="left:1093.00px;top:532.06px;width:92.50px;height:19.58px;overflow:hidden;"><span class="t" style="left:3.60px;top:3.72px;font-size:12px;line-height:12px;color:#111;transform:scaleX(0.9540);">February FH</span></div>
<div style="left:1186.90px;top:532.06px;width:71.50px;height:19.58px;overflow:hidden;"><span class="t" style="left:1.40px;top:3.72px;font-size:12px;line-height:12px;color:#111;transform:scaleX(0.9650);">Feb-10-2025</span></div>
<div style="left:1340.90px;top:532.06px;width:78.60px;height:19.58px;overflow:hidden;"><span class="t" style="left:3.60px;top:3.72px;font-size:12px;line-height:12px;color:#111;transform:scaleX(0.9357);">Floor</span></div>
<div style="left:1420.90px;top:532.06px;width:65.40px;height:19.58px;overflow:hidden;"><span class="t" style="left:3.60px;top:3.72px;font-size:12px;line-height:12px;color:#111;transform:scaleX(0.9570);">17707.59 kg</span></div>
<div style="left:245.00px;top:573.00px;width:1242.00px;height:1.00px;background:#222;"></div>
<div style="left:245.00px;top:574.00px;width:1242.00px;height:1.00px;background:rgba(0,0,0,0.38);"></div>
<div style="left:240.50px;top:572.82px;width:4.00px;height:1.00px;background:#dadada;"></div>
<div style="left:265.30px;top:553.04px;width:76.80px;height:19.58px;overflow:hidden;"><span class="t" style="left:3.60px;top:3.72px;font-size:12px;line-height:12px;color:#111;transform:scaleX(0.9017);">BIG MEAT CO</span></div>
<div style="left:343.50px;top:553.04px;width:78.60px;height:19.58px;overflow:hidden;"><span class="t" style="left:1.30px;top:3.72px;font-size:12px;line-height:12px;color:#1a0dff;text-decoration:underline;transform:scaleX(0.9570);">BMCO-266190</span></div>
<div style="left:501.30px;top:553.04px;width:74.60px;height:19.58px;overflow:hidden;"><span class="t" style="left:3.60px;top:3.72px;font-size:12px;line-height:12px;color:#111;transform:scaleX(0.9619);">Planning</span></div>
<div style="left:577.30px;top:553.04px;width:87.60px;height:19.58px;overflow:hidden;"><span class="t" style="left:3.60px;top:3.72px;font-size:12px;line-height:12px;color:#111;transform:scaleX(0.9906);">Confirmed</span></div>
<div style="left:666.30px;top:553.04px;width:94.70px;height:19.58px;overflow:hidden;"><span class="t" style="left:3.60px;top:3.72px;font-size:12px;line-height:12px;color:#111;transform:scaleX(0.9218);">Frozen</span></div>
<div style="left:762.40px;top:553.04px;width:47.40px;height:19.58px;overflow:hidden;"><span class="t" style="left:3.60px;top:3.72px;font-size:12px;line-height:12px;color:#111;transform:scaleX(1.0156);">No</span></div>
<div style="left:811.20px;top:553.04px;width:130.20px;height:19.58px;overflow:hidden;"><span class="t" style="left:3.60px;top:3.72px;font-size:12px;line-height:12px;color:#111;transform:scaleX(1.0156);">No</span></div>
<div style="left:942.80px;top:553.04px;width:62.90px;height:19.58px;overflow:hidden;"><span class="t" style="left:3.60px;top:3.72px;font-size:12px;line-height:12px;color:#111;transform:scaleX(0.9320);">Plant</span></div>
<div style="left:1007.10px;top:553.04px;width:84.50px;height:19.58px;overflow:hidden;"><span class="t" style="left:3.60px;top:3.72px;font-size:12px;line-height:12px;color:#111;transform:scaleX(0.8804);">Busan, KR</span></div>
<div style="left:1093.00px;top:553.04px;width:92.50px;height:19.58px;overflow:hidden;"><span class="t" style="left:3.60px;top:3.72px;font-size:12px;line-height:12px;color:#111;transform:scaleX(0.9540);">February LH</span></div>
<div style="left:1186.90px;top:553.04px;width:71.50px;height:19.58px;overflow:hidden;"><span class="t" style="left:1.40px;top:3.72px;font-size:12px;line-height:12px;color:#111;transform:scaleX(0.9650);">Feb-17-2025</span></div>
<div style="left:1340.90px;top:553.04px;width:78.60px;height:19.58px;overflow:hidden;"><span class="t" style="left:3.60px;top:3.72px;font-size:12px;line-height:12px;color:#111;transform:scaleX(0.9357);">Floor</span></div>
<div style="left:1420.90px;top:553.04px;width:65.40px;height:19.58px;overflow:hidden;"><span class="t" style="left:3.60px;top:3.72px;font-size:12px;line-height:12px;color:#111;transform:scaleX(0.9570);">12534.89 kg</span></div>
<div style="left:245.00px;top:594.00px;width:1242.00px;height:1.00px;background:#222;"></div>
<div style="left:245.00px;top:595.00px;width:1242.00px;height:1.00px;background:rgba(0,0,0,0.38);"></div>
<div style="left:240.50px;top:593.80px;width:4.00px;height:1.00px;background:#dadada;"></div>
<div style="left:265.30px;top:574.02px;width:76.80px;height:19.58px;overflow:hidden;"><span class="t" style="left:3.60px;top:3.72px;font-size:12px;line-height:12px;color:#111;transform:scaleX(0.9017);">BIG MEAT CO</span></div>
<div style="left:343.50px;top:574.02px;width:78.60px;height:19.58px;overflow:hidden;"><span class="t" style="left:1.30px;top:3.72px;font-size:12px;line-height:12px;color:#1a0dff;text-decoration:underline;transform:scaleX(0.9570);">BMCO-265122</span></div>
<div style="left:501.30px;top:574.02px;width:74.60px;height:19.58px;overflow:hidden;"><span class="t" style="left:3.60px;top:3.72px;font-size:12px;line-height:12px;color:#111;transform:scaleX(0.9619);">Planning</span></div>
<div style="left:577.30px;top:574.02px;width:87.60px;height:19.58px;overflow:hidden;"><span class="t" style="left:3.60px;top:3.72px;font-size:12px;line-height:12px;color:#111;transform:scaleX(0.9906);">Confirmed</span></div>
<div style="left:666.30px;top:574.02px;width:94.70px;height:19.58px;overflow:hidden;"><span class="t" style="left:3.60px;top:3.72px;font-size:12px;line-height:12px;color:#111;transform:scaleX(0.9218);">Frozen</span></div>
<div style="left:762.40px;top:574.02px;width:47.40px;height:19.58px;overflow:hidden;"><span class="t" style="left:3.60px;top:3.72px;font-size:12px;line-height:12px;color:#111;transform:scaleX(1.0156);">No</span></div>
<div style="left:811.20px;top:574.02px;width:130.20px;height:19.58px;overflow:hidden;"><span class="t" style="left:3.60px;top:3.72px;font-size:12px;line-height:12px;color:#111;transform:scaleX(1.0156);">No</span></div>
<div style="left:942.80px;top:574.02px;width:62.90px;height:19.58px;overflow:hidden;"><span class="t" style="left:3.60px;top:3.72px;font-size:12px;line-height:12px;color:#111;transform:scaleX(0.9320);">Plant</span></div>
<div style="left:1007.10px;top:574.02px;width:84.50px;height:19.58px;overflow:hidden;"><span class="t" style="left:3.60px;top:3.72px;font-size:12px;line-height:12px;color:#111;transform:scaleX(0.8804);">Busan, KR</span></div>
<div style="left:1093.00px;top:574.02px;width:92.50px;height:19.58px;overflow:hidden;"><span class="t" style="left:3.60px;top:3.72px;font-size:12px;line-height:12px;color:#111;transform:scaleX(0.9540);">December LH</span></div>
<div style="left:1186.90px;top:574.02px;width:71.50px;height:19.58px;overflow:hidden;"><span class="t" style="left:1.40px;top:3.72px;font-size:12px;line-height:12px;color:#111;transform:scaleX(0.9650);">Dec-31-2024</span></div>
<div style="left:1340.90px;top:574.02px;width:78.60px;height:19.58px;overflow:hidden;"><span class="t" style="left:3.60px;top:3.72px;font-size:12px;line-height:12px;color:#111;transform:scaleX(0.9357);">Floor</span></div>
<div style="left:1420.90px;top:574.02px;width:65.40px;height:19.58px;overflow:hidden;"><span class="t" style="left:3.60px;top:3.72px;font-size:12px;line-height:12px;color:#111;transform:scaleX(0.9570);">16414.27 kg</span></div>
<div style="left:245.00px;top:615.00px;width:1242.00px;height:1.00px;background:#222;"></div>
<div style="left:245.00px;top:616.00px;width:1242.00px;height:1.00px;background:rgba(0,0,0,0.38);"></div>
<div style="left:240.50px;top:614.78px;width:4.00px;height:1.00px;background:#dadada;"></div>
<div style="left:265.30px;top:595.00px;width:76.80px;height:19.58px;overflow:hidden;"><span class="t" style="left:3.60px;top:3.72px;font-size:12px;line-height:12px;color:#111;transform:scaleX(0.9017);">BIG MEAT CO</span></div>
<div style="left:343.50px;top:595.00px;width:78.60px;height:19.58px;overflow:hidden;"><span class="t" style="left:1.30px;top:3.72px;font-size:12px;line-height:12px;color:#1a0dff;text-decoration:underline;transform:scaleX(0.9570);">BMCO-265121</span></div>
<div style="left:501.30px;top:595.00px;width:74.60px;height:19.58px;overflow:hidden;"><span class="t" style="left:3.60px;top:3.72px;font-size:12px;line-height:12px;color:#111;transform:scaleX(0.9619);">Planning</span></div>
<div style="left:577.30px;top:595.00px;width:87.60px;height:19.58px;overflow:hidden;"><span class="t" style="left:3.60px;top:3.72px;font-size:12px;line-height:12px;color:#111;transform:scaleX(0.9906);">Confirmed</span></div>
<div style="left:666.30px;top:595.00px;width:94.70px;height:19.58px;overflow:hidden;"><span class="t" style="left:3.60px;top:3.72px;font-size:12px;line-height:12px;color:#111;transform:scaleX(0.9218);">Frozen</span></div>
<div style="left:762.40px;top:595.00px;width:47.40px;height:19.58px;overflow:hidden;"><span class="t" style="left:3.60px;top:3.72px;font-size:12px;line-height:12px;color:#111;transform:scaleX(1.0156);">No</span></div>
<div style="left:811.20px;top:595.00px;width:130.20px;height:19.58px;overflow:hidden;"><span class="t" style="left:3.60px;top:3.72px;font-size:12px;line-height:12px;color:#111;transform:scaleX(1.0156);">No</span></div>
<div style="left:942.80px;top:595.00px;width:62.90px;height:19.58px;overflow:hidden;"><span class="t" style="left:3.60px;top:3.72px;font-size:12px;line-height:12px;color:#111;transform:scaleX(0.9320);">Plant</span></div>
<div style="left:1007.10px;top:595.00px;width:84.50px;height:19.58px;overflow:hidden;"><span class="t" style="left:3.60px;top:3.72px;font-size:12px;line-height:12px;color:#111;transform:scaleX(0.8804);">Busan, KR</span></div>
<div style="left:1093.00px;top:595.00px;width:92.50px;height:19.58px;overflow:hidden;"><span class="t" style="left:3.60px;top:3.72px;font-size:12px;line-height:12px;color:#111;transform:scaleX(0.9540);">December LH</span></div>
<div style="left:1186.90px;top:595.00px;width:71.50px;height:19.58px;overflow:hidden;"><span class="t" style="left:1.40px;top:3.72px;font-size:12px;line-height:12px;color:#111;transform:scaleX(0.9650);">Dec-16-2024</span></div>
<div style="left:1340.90px;top:595.00px;width:78.60px;height:19.58px;overflow:hidden;"><span class="t" style="left:3.60px;top:3.72px;font-size:12px;line-height:12px;color:#111;transform:scaleX(0.9357);">Floor</span></div>
<div style="left:1420.90px;top:595.00px;width:65.40px;height:19.58px;overflow:hidden;"><span class="t" style="left:3.60px;top:3.72px;font-size:12px;line-height:12px;color:#111;transform:scaleX(0.9570);">11637.95 kg</span></div>
<div style="left:245.00px;top:636.00px;width:1242.00px;height:1.00px;background:#222;"></div>
<div style="left:245.00px;top:637.00px;width:1242.00px;height:1.00px;background:rgba(0,0,0,0.38);"></div>
<div style="left:240.50px;top:635.76px;width:4.00px;height:1.00px;background:#dadada;"></div>
<div style="left:265.30px;top:615.98px;width:76.80px;height:19.58px;overflow:hidden;"><span class="t" style="left:3.60px;top:3.72px;font-size:12px;line-height:12px;color:#111;transform:scaleX(0.9017);">BIG MEAT CO</span></div>
<div style="left:343.50px;top:615.98px;width:78.60px;height:19.58px;overflow:hidden;"><span class="t" style="left:1.30px;top:3.72px;font-size:12px;line-height:12px;color:#1a0dff;text-decoration:underline;transform:scaleX(0.9570);">BMCO-265127</span></div>
<div style="left:501.30px;top:615.98px;width:74.60px;height:19.58px;overflow:hidden;"><span class="t" style="left:3.60px;top:3.72px;font-size:12px;line-height:12px;color:#111;transform:scaleX(0.9619);">Planning</span></div>
<div style="left:577.30px;top:615.98px;width:87.60px;height:19.58px;overflow:hidden;"><span class="t" style="left:3.60px;top:3.72px;font-size:12px;line-height:12px;color:#111;transform:scaleX(0.9906);">Confirmed</span></div>
<div style="left:666.30px;top:615.98px;width:94.70px;height:19.58px;overflow:hidden;"><span class="t" style="left:3.60px;top:3.72px;font-size:12px;line-height:12px;color:#111;transform:scaleX(0.9218);">Frozen</span></div>
<div style="left:762.40px;top:615.98px;width:47.40px;height:19.58px;overflow:hidden;"><span class="t" style="left:3.60px;top:3.72px;font-size:12px;line-height:12px;color:#111;transform:scaleX(1.0156);">No</span></div>
<div style="left:811.20px;top:615.98px;width:130.20px;height:19.58px;overflow:hidden;"><span class="t" style="left:3.60px;top:3.72px;font-size:12px;line-height:12px;color:#111;transform:scaleX(1.0156);">No</span></div>
<div style="left:942.80px;top:615.98px;width:62.90px;height:19.58px;overflow:hidden;"><span class="t" style="left:3.60px;top:3.72px;font-size:12px;line-height:12px;color:#111;transform:scaleX(0.9320);">Plant</span></div>
<div style="left:1007.10px;top:615.98px;width:84.50px;height:19.58px;overflow:hidden;"><span class="t" style="left:3.60px;top:3.72px;font-size:12px;line-height:12px;color:#111;transform:scaleX(0.8804);">Busan, KR</span></div>
<div style="left:1093.00px;top:615.98px;width:92.50px;height:19.58px;overflow:hidden;"><span class="t" style="left:3.60px;top:3.72px;font-size:12px;line-height:12px;color:#111;transform:scaleX(0.9540);">November LH</span></div>
<div style="left:1186.90px;top:615.98px;width:71.50px;height:19.58px;overflow:hidden;"><span class="t" style="left:1.40px;top:3.72px;font-size:12px;line-height:12px;color:#111;transform:scaleX(0.9650);">Nov-27-2024</span></div>
<div style="left:1340.90px;top:615.98px;width:78.60px;height:19.58px;overflow:hidden;"><span class="t" style="left:3.60px;top:3.72px;font-size:12px;line-height:12px;color:#111;transform:scaleX(0.9357);">Floor</span></div>
<div style="left:1420.90px;top:615.98px;width:65.40px;height:19.58px;overflow:hidden;"><span class="t" style="left:3.60px;top:3.72px;font-size:12px;line-height:12px;color:#111;transform:scaleX(0.9570);">13787.75 kg</span></div>
<div style="left:245.00px;top:657.00px;width:1242.00px;height:1.00px;background:#222;"></div>
<div style="left:245.00px;top:658.00px;width:1242.00px;height:1.00px;background:rgba(0,0,0,0.38);"></div>
<div style="left:240.50px;top:656.74px;width:4.00px;height:1.00px;background:#dadada;"></div>
<div style="left:265.30px;top:636.96px;width:76.80px;height:19.58px;overflow:hidden;"><span class="t" style="left:3.60px;top:3.72px;font-size:12px;line-height:12px;color:#111;transform:scaleX(0.9017);">BIG MEAT CO</span></div>
<div style="left:343.50px;top:636.96px;width:78.60px;height:19.58px;overflow:hidden;"><span class="t" style="left:1.30px;top:3.72px;font-size:12px;line-height:12px;color:#1a0dff;text-decoration:underline;transform:scaleX(0.9570);">BMCO-265095</span></div>
<div style="left:501.30px;top:636.96px;width:74.60px;height:19.58px;overflow:hidden;"><span class="t" style="left:3.60px;top:3.72px;font-size:12px;line-height:12px;color:#111;transform:scaleX(0.9619);">Planning</span></div>
<div style="left:577.30px;top:636.96px;width:87.60px;height:19.58px;overflow:hidden;"><span class="t" style="left:3.60px;top:3.72px;font-size:12px;line-height:12px;color:#111;transform:scaleX(0.9906);">Confirmed</span></div>
<div style="left:666.30px;top:636.96px;width:94.70px;height:19.58px;overflow:hidden;"><span class="t" style="left:3.60px;top:3.72px;font-size:12px;line-height:12px;color:#111;transform:scaleX(0.9218);">Frozen</span></div>
<div style="left:762.40px;top:636.96px;width:47.40px;height:19.58px;overflow:hidden;"><span class="t" style="left:3.60px;top:3.72px;font-size:12px;line-height:12px;color:#111;transform:scaleX(1.0156);">No</span></div>
<div style="left:811.20px;top:636.96px;width:130.20px;height:19.58px;overflow:hidden;"><span class="t" style="left:3.60px;top:3.72px;font-size:12px;line-height:12px;color:#111;transform:scaleX(1.0156);">No</span></div>
<div style="left:942.80px;top:636.96px;width:62.90px;height:19.58px;overflow:hidden;"><span class="t" style="left:3.60px;top:3.72px;font-size:12px;line-height:12px;color:#111;transform:scaleX(0.9320);">Plant</span></div>
<div style="left:1007.10px;top:636.96px;width:84.50px;height:19.58px;overflow:hidden;"><span class="t" style="left:3.60px;top:3.72px;font-size:12px;line-height:12px;color:#111;transform:scaleX(0.8804);">Busan, KR</span></div>
<div style="left:1093.00px;top:636.96px;width:92.50px;height:19.58px;overflow:hidden;"><span class="t" style="left:3.60px;top:3.72px;font-size:12px;line-height:12px;color:#111;transform:scaleX(0.9540);">January LH</span></div>
<div style="left:1186.90px;top:636.96px;width:71.50px;height:19.58px;overflow:hidden;"><span class="t" style="left:1.40px;top:3.72px;font-size:12px;line-height:12px;color:#111;transform:scaleX(0.9650);">Jan-27-2025</span></div>
<div style="left:1340.90px;top:636.96px;width:78.60px;height:19.58px;overflow:hidden;"><span class="t" style="left:3.60px;top:3.72px;font-size:12px;line-height:12px;color:#111;transform:scaleX(0.9357);">Floor</span></div>
<div style="left:1420.90px;top:636.96px;width:65.40px;height:19.58px;overflow:hidden;"><span class="t" style="left:3.60px;top:3.72px;font-size:12px;line-height:12px;color:#111;transform:scaleX(0.9570);">12676.17 kg</span></div>
<div style="left:245.00px;top:657.94px;width:1242.00px;height:19.58px;background:#90ee90;"></div>
<div style="left:245.00px;top:678.00px;width:1242.00px;height:1.00px;background:#222;"></div>
<div style="left:245.00px;top:679.00px;width:1242.00px;height:1.00px;background:rgba(0,0,0,0.38);"></div>
<div style="left:240.50px;top:677.72px;width:4.00px;height:1.00px;background:#dadada;"></div>
<div style="left:265.30px;top:657.94px;width:76.80px;height:19.58px;overflow:hidden;"><span class="t" style="left:3.60px;top:3.72px;font-size:12px;line-height:12px;color:#111;transform:scaleX(0.9017);">BIG MEAT CO</span></div>
<div style="left:343.50px;top:657.94px;width:78.60px;height:19.58px;overflow:hidden;"><span class="t" style="left:1.30px;top:3.72px;font-size:12px;line-height:12px;color:#0000d8;text-decoration:underline;transform:scaleX(0.9570);">BMC-06256</span></div>
<div style="left:423.50px;top:657.94px;width:76.40px;height:19.58px;overflow:hidden;"><span class="t" style="left:3.60px;top:3.72px;font-size:12px;line-height:12px;color:#111;transform:scaleX(0.9750);">INN267250</span></div>
<div style="left:501.30px;top:657.94px;width:74.60px;height:19.58px;overflow:hidden;"><span class="t" style="left:3.60px;top:3.72px;font-size:12px;line-height:12px;color:#111;transform:scaleX(0.9619);">Planning</span></div>
<div style="left:577.30px;top:657.94px;width:87.60px;height:19.58px;overflow:hidden;"><span class="t" style="left:3.60px;top:3.72px;font-size:12px;line-height:12px;color:#111;transform:scaleX(0.9550);">Revised</span></div>
<div style="left:666.30px;top:657.94px;width:94.70px;height:19.58px;overflow:hidden;"><span class="t" style="left:3.60px;top:3.72px;font-size:12px;line-height:12px;color:#111;transform:scaleX(0.9550);">Chilled</span></div>
<div style="left:762.40px;top:657.94px;width:47.40px;height:19.58px;overflow:hidden;"><span class="t" style="left:3.60px;top:3.72px;font-size:12px;line-height:12px;color:#111;transform:scaleX(1.0156);">No</span></div>
<div style="left:811.20px;top:657.94px;width:130.20px;height:19.58px;overflow:hidden;"><span class="t" style="left:3.60px;top:3.72px;font-size:12px;line-height:12px;color:#111;transform:scaleX(1.0156);">No</span></div>
<div style="left:942.80px;top:657.94px;width:62.90px;height:19.58px;overflow:hidden;"><span class="t" style="left:3.60px;top:3.72px;font-size:12px;line-height:12px;color:#111;transform:scaleX(0.9320);">Plant</span></div>
<div style="left:1007.10px;top:657.94px;width:84.50px;height:19.58px;overflow:hidden;"><span class="t" style="left:3.60px;top:3.72px;font-size:12px;line-height:12px;color:#111;transform:scaleX(0.9550);">Kaohsiung, TW</span></div>
<div style="left:1093.00px;top:657.94px;width:92.50px;height:19.58px;overflow:hidden;"><span class="t" style="left:3.60px;top:3.72px;font-size:12px;line-height:12px;color:#111;transform:scaleX(0.9540);">March FH</span></div>
<div style="left:1186.90px;top:657.94px;width:71.50px;height:19.58px;overflow:hidden;"><span class="t" style="left:1.40px;top:3.72px;font-size:12px;line-height:12px;color:#111;transform:scaleX(0.9650);">Mar-5-2025</span></div>
<div style="left:1340.90px;top:657.94px;width:78.60px;height:19.58px;overflow:hidden;"><span class="t" style="left:3.60px;top:3.72px;font-size:12px;line-height:12px;color:#111;transform:scaleX(0.9550);">Pallet</span></div>
<div style="left:1420.90px;top:657.94px;width:65.40px;height:19.58px;overflow:hidden;"><span class="t" style="left:3.60px;top:3.72px;font-size:12px;line-height:12px;color:#111;transform:scaleX(0.9570);">284.88 kg</span></div>
<div style="left:245.00px;top:699.00px;width:1242.00px;height:1.00px;background:#222;"></div>
<div style="left:245.00px;top:700.00px;width:1242.00px;height:1.00px;background:rgba(0,0,0,0.38);"></div>
<div style="left:240.50px;top:698.70px;width:4.00px;height:1.00px;background:#dadada;"></div>
<div style="left:265.30px;top:678.92px;width:76.80px;height:19.58px;overflow:hidden;"><span class="t" style="left:3.60px;top:3.72px;font-size:12px;line-height:12px;color:#111;transform:scaleX(0.9017);">BIG MEAT CO</span></div>
<div style="left:343.50px;top:678.92px;width:78.60px;height:19.58px;overflow:hidden;"><span class="t" style="left:1.30px;top:3.72px;font-size:12px;line-height:12px;color:#1a0dff;text-decoration:underline;transform:scaleX(0.9570);">BMCO-262327</span></div>
<div style="left:501.30px;top:678.92px;width:74.60px;height:19.58px;overflow:hidden;"><span class="t" style="left:3.60px;top:3.72px;font-size:12px;line-height:12px;color:#111;transform:scaleX(0.9619);">Planning</span></div>
<div style="left:577.30px;top:678.92px;width:87.60px;height:19.58px;overflow:hidden;"><span class="t" style="left:3.60px;top:3.72px;font-size:12px;line-height:12px;color:#111;transform:scaleX(0.9906);">Confirmed</span></div>
<div style="left:666.30px;top:678.92px;width:94.70px;height:19.58px;overflow:hidden;"><span class="t" style="left:3.60px;top:3.72px;font-size:12px;line-height:12px;color:#111;transform:scaleX(0.9218);">Frozen</span></div>
<div style="left:762.40px;top:678.92px;width:47.40px;height:19.58px;overflow:hidden;"><span class="t" style="left:3.60px;top:3.72px;font-size:12px;line-height:12px;color:#111;transform:scaleX(1.0156);">No</span></div>
<div style="left:811.20px;top:678.92px;width:130.20px;height:19.58px;overflow:hidden;"><span class="t" style="left:3.60px;top:3.72px;font-size:12px;line-height:12px;color:#111;transform:scaleX(1.0156);">No</span></div>
<div style="left:942.80px;top:678.92px;width:62.90px;height:19.58px;overflow:hidden;"><span class="t" style="left:3.60px;top:3.72px;font-size:12px;line-height:12px;color:#111;transform:scaleX(0.9320);">Plant</span></div>
<div style="left:1007.10px;top:678.92px;width:84.50px;height:19.58px;overflow:hidden;"><span class="t" style="left:3.60px;top:3.72px;font-size:12px;line-height:12px;color:#111;transform:scaleX(0.8804);">Busan, KR</span></div>
<div style="left:1093.00px;top:678.92px;width:92.50px;height:19.58px;overflow:hidden;"><span class="t" style="left:3.60px;top:3.72px;font-size:12px;line-height:12px;color:#111;transform:scaleX(0.9540);">November LH</span></div>
<div style="left:1186.90px;top:678.92px;width:71.50px;height:19.58px;overflow:hidden;"><span class="t" style="left:1.40px;top:3.72px;font-size:12px;line-height:12px;color:#111;transform:scaleX(0.9650);">Nov-18-2024</span></div>
<div style="left:1340.90px;top:678.92px;width:78.60px;height:19.58px;overflow:hidden;"><span class="t" style="left:3.60px;top:3.72px;font-size:12px;line-height:12px;color:#111;transform:scaleX(0.9357);">Floor</span></div>
<div style="left:1420.90px;top:678.92px;width:65.40px;height:19.58px;overflow:hidden;"><span class="t" style="left:3.60px;top:3.72px;font-size:12px;line-height:12px;color:#111;transform:scaleX(0.9570);">15436.61 kg</span></div>
<div style="left:245.00px;top:720.00px;width:1242.00px;height:1.00px;background:#222;"></div>
<div style="left:245.00px;top:721.00px;width:1242.00px;height:1.00px;background:rgba(0,0,0,0.38);"></div>
<div style="left:240.50px;top:719.68px;width:4.00px;height:1.00px;background:#dadada;"></div>
<div style="left:265.30px;top:699.90px;width:76.80px;height:19.58px;overflow:hidden;"><span class="t" style="left:3.60px;top:3.72px;font-size:12px;line-height:12px;color:#111;transform:scaleX(0.9017);">BIG MEAT CO</span></div>
<div style="left:343.50px;top:699.90px;width:78.60px;height:19.58px;overflow:hidden;"><span class="t" style="left:1.30px;top:3.72px;font-size:12px;line-height:12px;color:#1a0dff;text-decoration:underline;transform:scaleX(0.9570);">BMCO-262333</span></div>
<div style="left:423.50px;top:699.90px;width:76.40px;height:19.58px;overflow:hidden;"><span class="t" style="left:3.60px;top:3.72px;font-size:12px;line-height:12px;color:#111;transform:scaleX(0.9750);">INN262333</span></div>
<div style="left:501.30px;top:699.90px;width:74.60px;height:19.58px;overflow:hidden;"><span class="t" style="left:3.60px;top:3.72px;font-size:12px;line-height:12px;color:#111;transform:scaleX(0.9619);">Planning</span></div>
<div style="left:577.30px;top:699.90px;width:87.60px;height:19.58px;overflow:hidden;"><span class="t" style="left:3.60px;top:3.72px;font-size:12px;line-height:12px;color:#111;transform:scaleX(0.9906);">Confirmed</span></div>
<div style="left:666.30px;top:699.90px;width:94.70px;height:19.58px;overflow:hidden;"><span class="t" style="left:3.60px;top:3.72px;font-size:12px;line-height:12px;color:#111;transform:scaleX(0.9218);">Frozen</span></div>
<div style="left:762.40px;top:699.90px;width:47.40px;height:19.58px;overflow:hidden;"><span class="t" style="left:3.60px;top:3.72px;font-size:12px;line-height:12px;color:#111;transform:scaleX(1.0156);">No</span></div>
<div style="left:811.20px;top:699.90px;width:130.20px;height:19.58px;overflow:hidden;"><span class="t" style="left:3.60px;top:3.72px;font-size:12px;line-height:12px;color:#111;transform:scaleX(1.0156);">No</span></div>
<div style="left:942.80px;top:699.90px;width:62.90px;height:19.58px;overflow:hidden;"><span class="t" style="left:3.60px;top:3.72px;font-size:12px;line-height:12px;color:#111;transform:scaleX(0.9320);">Plant</span></div>
<div style="left:1007.10px;top:699.90px;width:84.50px;height:19.58px;overflow:hidden;"><span class="t" style="left:3.60px;top:3.72px;font-size:12px;line-height:12px;color:#111;transform:scaleX(0.8804);">Busan, KR</span></div>
<div style="left:1093.00px;top:699.90px;width:92.50px;height:19.58px;overflow:hidden;"><span class="t" style="left:3.60px;top:3.72px;font-size:12px;line-height:12px;color:#111;transform:scaleX(0.9540);">December LH</span></div>
<div style="left:1186.90px;top:699.90px;width:71.50px;height:19.58px;overflow:hidden;"><span class="t" style="left:1.40px;top:3.72px;font-size:12px;line-height:12px;color:#111;transform:scaleX(0.9650);">Dec-18-2024</span></div>
<div style="left:1340.90px;top:699.90px;width:78.60px;height:19.58px;overflow:hidden;"><span class="t" style="left:3.60px;top:3.72px;font-size:12px;line-height:12px;color:#111;transform:scaleX(0.9357);">Floor</span></div>
<div style="left:1420.90px;top:699.90px;width:65.40px;height:19.58px;overflow:hidden;"><span class="t" style="left:3.60px;top:3.72px;font-size:12px;line-height:12px;color:#111;transform:scaleX(0.9570);">16375.00 kg</span></div>
<div style="left:245.00px;top:741.00px;width:1242.00px;height:1.00px;background:#222;"></div>
<div style="left:245.00px;top:742.00px;width:1242.00px;height:1.00px;background:rgba(0,0,0,0.38);"></div>
<div style="left:240.50px;top:740.66px;width:4.00px;height:1.00px;background:#dadada;"></div>
<div style="left:265.30px;top:720.88px;width:76.80px;height:19.58px;overflow:hidden;"><span class="t" style="left:3.60px;top:3.72px;font-size:12px;line-height:12px;color:#111;transform:scaleX(0.9017);">BIG MEAT CO</span></div>
<div style="left:343.50px;top:720.88px;width:78.60px;height:19.58px;overflow:hidden;"><span class="t" style="left:1.30px;top:3.72px;font-size:12px;line-height:12px;color:#1a0dff;text-decoration:underline;transform:scaleX(0.9570);">BMCO-265078</span></div>
<div style="left:423.50px;top:720.88px;width:76.40px;height:19.58px;overflow:hidden;"><span class="t" style="left:3.60px;top:3.72px;font-size:12px;line-height:12px;color:#111;transform:scaleX(0.9750);">INN265078</span></div>
<div style="left:501.30px;top:720.88px;width:74.60px;height:19.58px;overflow:hidden;"><span class="t" style="left:3.60px;top:3.72px;font-size:12px;line-height:12px;color:#111;transform:scaleX(0.9619);">Planning</span></div>
<div style="left:577.30px;top:720.88px;width:87.60px;height:19.58px;overflow:hidden;"><span class="t" style="left:3.60px;top:3.72px;font-size:12px;line-height:12px;color:#111;transform:scaleX(0.9906);">Confirmed</span></div>
<div style="left:666.30px;top:720.88px;width:94.70px;height:19.58px;overflow:hidden;"><span class="t" style="left:3.60px;top:3.72px;font-size:12px;line-height:12px;color:#111;transform:scaleX(0.9218);">Frozen</span></div>
<div style="left:762.40px;top:720.88px;width:47.40px;height:19.58px;overflow:hidden;"><span class="t" style="left:3.60px;top:3.72px;font-size:12px;line-height:12px;color:#111;transform:scaleX(1.0156);">No</span></div>
<div style="left:811.20px;top:720.88px;width:130.20px;height:19.58px;overflow:hidden;"><span class="t" style="left:3.60px;top:3.72px;font-size:12px;line-height:12px;color:#111;transform:scaleX(1.0156);">No</span></div>
<div style="left:942.80px;top:720.88px;width:62.90px;height:19.58px;overflow:hidden;"><span class="t" style="left:3.60px;top:3.72px;font-size:12px;line-height:12px;color:#111;transform:scaleX(0.9320);">Plant</span></div>
<div style="left:1007.10px;top:720.88px;width:84.50px;height:19.58px;overflow:hidden;"><span class="t" style="left:3.60px;top:3.72px;font-size:12px;line-height:12px;color:#111;transform:scaleX(0.8804);">Busan, KR</span></div>
<div style="left:1093.00px;top:720.88px;width:92.50px;height:19.58px;overflow:hidden;"><span class="t" style="left:3.60px;top:3.72px;font-size:12px;line-height:12px;color:#111;transform:scaleX(0.9540);">December LH</span></div>
<div style="left:1186.90px;top:720.88px;width:71.50px;height:19.58px;overflow:hidden;"><span class="t" style="left:1.40px;top:3.72px;font-size:12px;line-height:12px;color:#111;transform:scaleX(0.9650);">Dec-16-2024</span></div>
<div style="left:1259.80px;top:720.88px;width:79.70px;height:19.58px;overflow:hidden;"><span class="t" style="left:1.40px;top:3.72px;font-size:12px;line-height:12px;color:#111;transform:scaleX(0.9650);">Dec-30-2024</span></div>
<div style="left:1340.90px;top:720.88px;width:78.60px;height:19.58px;overflow:hidden;"><span class="t" style="left:3.60px;top:3.72px;font-size:12px;line-height:12px;color:#111;transform:scaleX(0.9357);">Floor</span></div>
<div style="left:1420.90px;top:720.88px;width:65.40px;height:19.58px;overflow:hidden;"><span class="t" style="left:3.60px;top:3.72px;font-size:12px;line-height:12px;color:#111;transform:scaleX(0.9570);">12473.81 kg</span></div>
<div style="left:245.00px;top:762.00px;width:1242.00px;height:1.00px;background:#222;"></div>
<div style="left:245.00px;top:763.00px;width:1242.00px;height:1.00px;background:rgba(0,0,0,0.38);"></div>
<div style="left:240.50px;top:761.64px;width:4.00px;height:1.00px;background:#dadada;"></div>
<div style="left:265.30px;top:741.86px;width:76.80px;height:19.58px;overflow:hidden;"><span class="t" style="left:3.60px;top:3.72px;font-size:12px;line-height:12px;color:#111;transform:scaleX(0.9017);">BIG MEAT CO</span></div>
<div style="left:343.50px;top:741.86px;width:78.60px;height:19.58px;overflow:hidden;"><span class="t" style="left:1.30px;top:3.72px;font-size:12px;line-height:12px;color:#1a0dff;text-decoration:underline;transform:scaleX(0.9570);">BMCO-265120</span></div>
<div style="left:423.50px;top:741.86px;width:76.40px;height:19.58px;overflow:hidden;"><span class="t" style="left:3.60px;top:3.72px;font-size:12px;line-height:12px;color:#111;transform:scaleX(0.9750);">INN265120</span></div>
<div style="left:501.30px;top:741.86px;width:74.60px;height:19.58px;overflow:hidden;"><span class="t" style="left:3.60px;top:3.72px;font-size:12px;line-height:12px;color:#111;transform:scaleX(0.9619);">Planning</span></div>
<div style="left:577.30px;top:741.86px;width:87.60px;height:19.58px;overflow:hidden;"><span class="t" style="left:3.60px;top:3.72px;font-size:12px;line-height:12px;color:#111;transform:scaleX(0.9906);">Confirmed</span></div>
<div style="left:666.30px;top:741.86px;width:94.70px;height:19.58px;overflow:hidden;"><span class="t" style="left:3.60px;top:3.72px;font-size:12px;line-height:12px;color:#111;transform:scaleX(0.9218);">Frozen</span></div>
<div style="left:762.40px;top:741.86px;width:47.40px;height:19.58px;overflow:hidden;"><span class="t" style="left:3.60px;top:3.72px;font-size:12px;line-height:12px;color:#111;transform:scaleX(1.0156);">No</span></div>
<div style="left:811.20px;top:741.86px;width:130.20px;height:19.58px;overflow:hidden;"><span class="t" style="left:3.60px;top:3.72px;font-size:12px;line-height:12px;color:#111;transform:scaleX(1.0156);">No</span></div>
<div style="left:942.80px;top:741.86px;width:62.90px;height:19.58px;overflow:hidden;"><span class="t" style="left:3.60px;top:3.72px;font-size:12px;line-height:12px;color:#111;transform:scaleX(0.9320);">Plant</span></div>
<div style="left:1007.10px;top:741.86px;width:84.50px;height:19.58px;overflow:hidden;"><span class="t" style="left:3.60px;top:3.72px;font-size:12px;line-height:12px;color:#111;transform:scaleX(0.8804);">Busan, KR</span></div>
<div style="left:1093.00px;top:741.86px;width:92.50px;height:19.58px;overflow:hidden;"><span class="t" style="left:3.60px;top:3.72px;font-size:12px;line-height:12px;color:#111;transform:scaleX(0.9540);">December LH</span></div>
<div style="left:1186.90px;top:741.86px;width:71.50px;height:19.58px;overflow:hidden;"><span class="t" style="left:1.40px;top:3.72px;font-size:12px;line-height:12px;color:#111;transform:scaleX(0.9650);">Dec-18-2024</span></div>
<div style="left:1259.80px;top:741.86px;width:79.70px;height:19.58px;overflow:hidden;"><span class="t" style="left:1.40px;top:3.72px;font-size:12px;line-height:12px;color:#111;transform:scaleX(0.9650);">Dec-30-2024</span></div>
<div style="left:1340.90px;top:741.86px;width:78.60px;height:19.58px;overflow:hidden;"><span class="t" style="left:3.60px;top:3.72px;font-size:12px;line-height:12px;color:#111;transform:scaleX(0.9357);">Floor</span></div>
<div style="left:1420.90px;top:741.86px;width:65.40px;height:19.58px;overflow:hidden;"><span class="t" style="left:3.60px;top:3.72px;font-size:12px;line-height:12px;color:#111;transform:scaleX(0.9570);">13326.05 kg</span></div>
<div style="left:239.60px;top:155.00px;width:5.60px;height:20.50px;border:1px solid #a8d4f2;box-sizing:border-box;background:#f4f9fd;"></div>
<div style="left:264.00px;top:154.00px;width:1.00px;height:609.00px;background:#222;"></div>
<div style="left:265.00px;top:154.00px;width:1.00px;height:609.00px;background:rgba(0,0,0,0.38);"></div>
<div style="left:342.00px;top:154.00px;width:1.00px;height:609.00px;background:#222;"></div>
<div style="left:343.00px;top:154.00px;width:1.00px;height:609.00px;background:rgba(0,0,0,0.38);"></div>
<div style="left:422.00px;top:154.00px;width:1.00px;height:609.00px;background:#222;"></div>
<div style="left:423.00px;top:154.00px;width:1.00px;height:609.00px;background:rgba(0,0,0,0.38);"></div>
<div style="left:500.00px;top:154.00px;width:1.00px;height:609.00px;background:#222;"></div>
<div style="left:501.00px;top:154.00px;width:1.00px;height:609.00px;background:rgba(0,0,0,0.38);"></div>
<div style="left:576.00px;top:154.00px;width:1.00px;height:609.00px;background:#222;"></div>
<div style="left:577.00px;top:154.00px;width:1.00px;height:609.00px;background:rgba(0,0,0,0.38);"></div>
<div style="left:665.00px;top:154.00px;width:1.00px;height:609.00px;background:#222;"></div>
<div style="left:666.00px;top:154.00px;width:1.00px;height:609.00px;background:rgba(0,0,0,0.38);"></div>
<div style="left:761.00px;top:154.00px;width:1.00px;height:609.00px;background:#222;"></div>
<div style="left:762.00px;top:154.00px;width:1.00px;height:609.00px;background:rgba(0,0,0,0.38);"></div>
<div style="left:810.00px;top:154.00px;width:1.00px;height:609.00px;background:#222;"></div>
<div style="left:811.00px;top:154.00px;width:1.00px;height:609.00px;background:rgba(0,0,0,0.38);"></div>
<div style="left:942.00px;top:154.00px;width:1.00px;height:609.00px;background:#222;"></div>
<div style="left:943.00px;top:154.00px;width:1.00px;height:609.00px;background:rgba(0,0,0,0.38);"></div>
<div style="left:1006.00px;top:154.00px;width:1.00px;height:609.00px;background:#222;"></div>
<div style="left:1007.00px;top:154.00px;width:1.00px;height:609.00px;background:rgba(0,0,0,0.38);"></div>
<div style="left:1092.00px;top:154.00px;width:1.00px;height:609.00px;background:#222;"></div>
<div style="left:1093.00px;top:154.00px;width:1.00px;height:609.00px;background:rgba(0,0,0,0.38);"></div>
<div style="left:1186.00px;top:154.00px;width:1.00px;height:609.00px;background:#222;"></div>
<div style="left:1187.00px;top:154.00px;width:1.00px;height:609.00px;background:rgba(0,0,0,0.38);"></div>
<div style="left:1259.00px;top:154.00px;width:1.00px;height:609.00px;background:#222;"></div>
<div style="left:1260.00px;top:154.00px;width:1.00px;height:609.00px;background:rgba(0,0,0,0.38);"></div>
<div style="left:1340.00px;top:154.00px;width:1.00px;height:609.00px;background:#222;"></div>
<div style="left:1341.00px;top:154.00px;width:1.00px;height:609.00px;background:rgba(0,0,0,0.38);"></div>
<div style="left:1420.00px;top:154.00px;width:1.00px;height:609.00px;background:#222;"></div>
<div style="left:1421.00px;top:154.00px;width:1.00px;height:609.00px;background:rgba(0,0,0,0.38);"></div>
<div style="left:1487.00px;top:130.20px;width:16.50px;height:632.50px;background:#f0f0f0;"></div>
<div style="left:1487.00px;top:171.80px;width:16.00px;height:54.00px;background:#c8c8c8;"></div>
<svg style="position:absolute;left:1488px;top:158px" width="14" height="10"><path d="M2.5 7 L7 2.5 L11.5 7" fill="none" stroke="#a0a0a0" stroke-width="1.1"/></svg>
<svg style="position:absolute;left:1488px;top:751px" width="14" height="10"><path d="M2.5 2.5 L7 7 L11.5 2.5" fill="none" stroke="#a0a0a0" stroke-width="1.1"/></svg>
<div style="left:239.30px;top:764.40px;width:1248.00px;height:17.00px;background:#f0f0f0;"></div>
<div style="left:262.30px;top:764.40px;width:833.00px;height:17.00px;background:#c8c8c8;"></div>
<svg style="position:absolute;left:250px;top:767px" width="10" height="12"><path d="M7 2 L2.8 6 L7 10" fill="none" stroke="#a0a0a0" stroke-width="1.1"/></svg>
<svg style="position:absolute;left:1473px;top:767px" width="10" height="12"><path d="M3 2 L7.2 6 L3 10" fill="none" stroke="#a0a0a0" stroke-width="1.1"/></svg>
<div style="left:1487.00px;top:764.40px;width:16.00px;height:17.00px;background:#f0f0f0;"></div>
<span class="t" style="left:243.50px;top:790.84px;font-size:12px;line-height:12px;color:#2222ee;text-decoration:underline;transform:scaleX(0.9550);">Save View Settings</span>
<span class="t" style="left:352.30px;top:790.84px;font-size:12px;line-height:12px;color:#2222ee;text-decoration:underline;transform:scaleX(0.9550);">Clear View Settings</span>
<div style="left:238.50px;top:810.00px;width:1255.50px;height:29.30px;border:1.2px solid #a9a9a9;border-radius:3px;box-sizing:border-box;background:#fff;"></div>
<span class="t" style="left:279.00px;top:818.92px;font-size:12.5px;line-height:12.5px;color:#111;font-weight:700;transform:scaleX(0.8959);">Rows</span>
<div style="left:323.80px;top:817.4px;width:15px;height:15px;border:1.3px solid #333;border-radius:50%;box-sizing:border-box;"></div>
<span class="t" style="left:344.70px;top:819.34px;font-size:12px;line-height:12px;color:#222;transform:scaleX(0.9576);">Planning</span>
<div style="left:405.00px;top:817.4px;width:15px;height:15px;background:#ffb3c0;border-radius:50%;"></div>
<span class="t" style="left:425.50px;top:819.34px;font-size:12px;line-height:12px;color:#222;transform:scaleX(0.9903);">New Order</span>
<div style="left:497.80px;top:817.4px;width:15px;height:15px;background:#ffff00;border-radius:50%;"></div>
<span class="t" style="left:517.60px;top:819.34px;font-size:12px;line-height:12px;color:#222;transform:scaleX(0.9787);">Shipped</span>
<div style="left:576.30px;top:817.4px;width:15px;height:15px;background:#8dc63f;border-radius:50%;"></div>
<span class="t" style="left:596.50px;top:819.34px;font-size:12px;line-height:12px;color:#222;transform:scaleX(0.9964);">Shipped Not Billed</span>
<div style="left:710.50px;top:817.4px;width:15px;height:15px;background:#aee8ec;border-radius:50%;"></div>
<span class="t" style="left:730.80px;top:819.34px;font-size:12px;line-height:12px;color:#222;transform:scaleX(0.9558);">Revision Requested By Planning</span>
<div style="left:913.00px;top:817.4px;width:15px;height:15px;background:#90ee90;border-radius:50%;"></div>
<span class="t" style="left:933.60px;top:819.34px;font-size:12px;line-height:12px;color:#222;transform:scaleX(0.8893);">Revised By CSR</span>
<div style="left:1028.70px;top:817.4px;width:15px;height:15px;background:#a8a8a8;border-radius:50%;"></div>
<span class="t" style="left:1048.60px;top:819.34px;font-size:12px;line-height:12px;color:#222;transform:scaleX(0.9494);">Cancelled</span>
<div style="left:395.40px;top:47.00px;width:190.10px;height:192.00px;background:#eeeff1;border-radius:0 0 3px 3px;box-shadow:1px 1px 0 rgba(0,0,0,0.26);"></div>
<div style="left:398.00px;top:122.20px;width:183.00px;height:38.60px;background:#e4e5e8;"></div>
<div style="left:427.00px;top:197.00px;width:158.50px;height:1.00px;background:#d8d9dc;"></div>
<span class="t" style="left:434.40px;top:56.50px;font-size:13px;line-height:13px;color:#222;transform:scaleX(0.8919);">Customers</span>
<span class="t" style="left:434.40px;top:92.30px;font-size:13px;line-height:13px;color:#222;transform:scaleX(0.8861);">Contacts</span>
<span class="t" style="left:434.40px;top:133.40px;font-size:13px;line-height:13px;color:#222;transform:scaleX(0.9006);">Customer Orders</span>
<span class="t" style="left:434.40px;top:169.40px;font-size:13px;line-height:13px;color:#222;transform:scaleX(0.8577);">Sales Reservations</span>
<span class="t" style="left:434.40px;top:210.20px;font-size:13px;line-height:13px;color:#222;transform:scaleX(0.8644);">Sales Programs</span>
<div style="left:393.00px;top:117.20px;width:193.00px;height:48.60px;border:5px solid #fc3d10;box-sizing:border-box;"></div>
</body></html>
